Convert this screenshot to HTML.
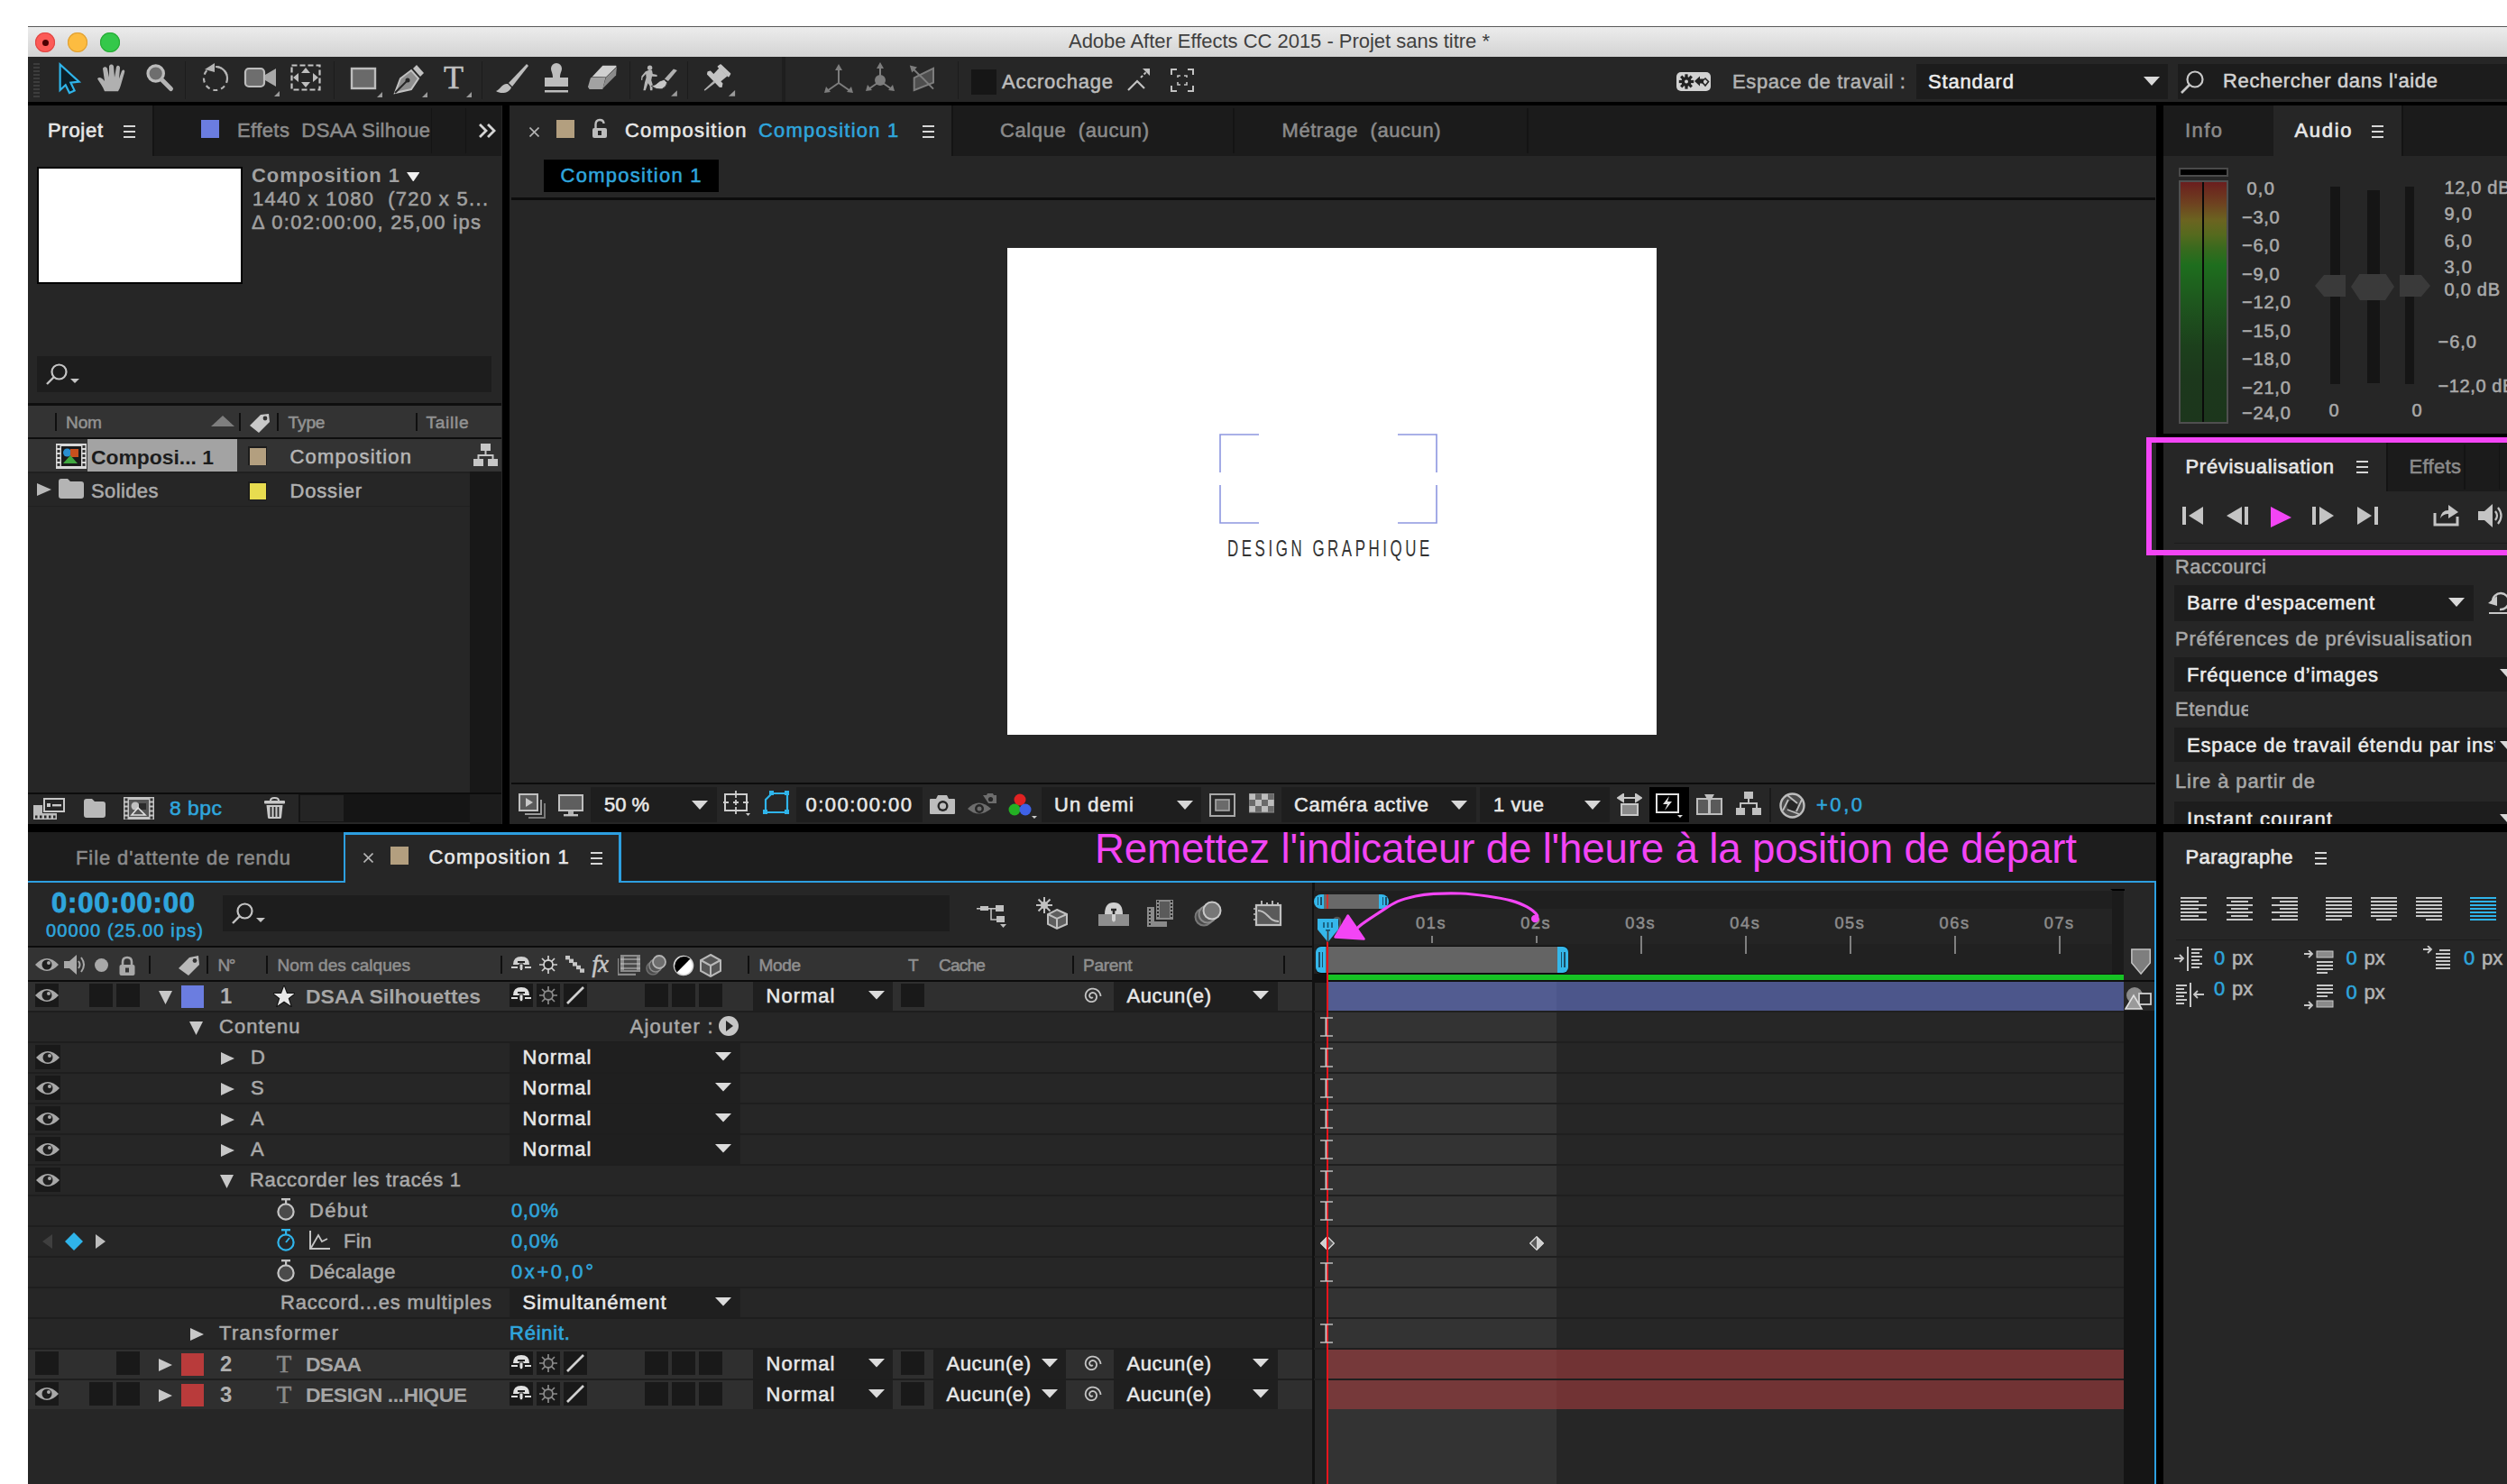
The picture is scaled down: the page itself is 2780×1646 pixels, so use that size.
<!DOCTYPE html>
<html lang="fr"><head><meta charset="utf-8"><title>Adobe After Effects CC 2015 - Projet sans titre *</title>
<style>
html,body{margin:0;padding:0;background:#fff;}
#r{position:relative;width:2780px;height:1646px;overflow:hidden;background:#fff;font-family:"Liberation Sans", sans-serif;}
#r div,#r span,#r svg{position:absolute;}
#r span{white-space:pre;-webkit-text-stroke:0.55px;}
</style></head><body><div id="r">
<div style="left:31px;top:29px;width:2749px;height:1617px;background:#000;"></div>
<div style="left:31px;top:29px;width:2749px;height:1px;background:#5a5a5a;"></div>
<div style="left:31px;top:30px;width:2749px;height:33px;background:linear-gradient(#ececec,#d3d3d3);"></div>
<div style="left:39px;top:36px;width:22px;height:22px;background:#fc5b57;border-radius:50%;box-shadow:inset 0 0 0 1px #df4744;"></div>
<div style="left:75px;top:36px;width:22px;height:22px;background:#fdbc40;border-radius:50%;box-shadow:inset 0 0 0 1px #de9f34;"></div>
<div style="left:111px;top:36px;width:22px;height:22px;background:#34c84a;border-radius:50%;box-shadow:inset 0 0 0 1px #27aa35;"></div>
<div style="left:46.5px;top:43.5px;width:7px;height:7px;background:#4c0102;border-radius:50%;"></div>
<span style="left:1185.0px;top:30.5px;font-size:22px;line-height:30px;color:#404040;letter-spacing:-0.02px;-webkit-text-stroke:0;">Adobe After Effects CC 2015 - Projet sans titre *</span>
<div style="left:31px;top:63px;width:2749px;height:50px;background:#262626;"></div>
<div style="left:37px;top:70px;width:7px;height:2px;background:#3c3c3c;"></div>
<div style="left:37px;top:74px;width:7px;height:2px;background:#3c3c3c;"></div>
<div style="left:37px;top:78px;width:7px;height:2px;background:#3c3c3c;"></div>
<div style="left:37px;top:82px;width:7px;height:2px;background:#3c3c3c;"></div>
<div style="left:37px;top:86px;width:7px;height:2px;background:#3c3c3c;"></div>
<div style="left:37px;top:90px;width:7px;height:2px;background:#3c3c3c;"></div>
<div style="left:37px;top:94px;width:7px;height:2px;background:#3c3c3c;"></div>
<div style="left:37px;top:98px;width:7px;height:2px;background:#3c3c3c;"></div>
<div style="left:37px;top:102px;width:7px;height:2px;background:#3c3c3c;"></div>
<div style="left:37px;top:106px;width:7px;height:2px;background:#3c3c3c;"></div>
<div style="left:205px;top:68px;width:1px;height:42px;background:#1c1c1c;"></div>
<div style="left:370px;top:68px;width:1px;height:42px;background:#1c1c1c;"></div>
<div style="left:534px;top:68px;width:1px;height:42px;background:#1c1c1c;"></div>
<div style="left:698px;top:68px;width:1px;height:42px;background:#1c1c1c;"></div>
<div style="left:762px;top:68px;width:1px;height:42px;background:#1c1c1c;"></div>
<div style="left:1062px;top:68px;width:1px;height:42px;background:#1c1c1c;"></div>
<div style="left:866.5px;top:63px;width:4px;height:50px;background:#1e1e1e;"></div>
<svg style="left:62px;top:66px;" width="30" height="42" viewBox="0 0 30 42" preserveAspectRatio="none"><path d="M4.6 5.5V34L10.7 28.3L15 37L20.6 34.4L16.4 25.6L25.6 24.7Z" fill="#0c1e27" stroke="#2fb4ea" stroke-width="2.2" stroke-linejoin="miter"/></svg>
<svg style="left:107px;top:70px;" width="36" height="33" viewBox="0 0 36 38" preserveAspectRatio="none"><path d="M9 36C7 30 3 24 1 20C3 17 6 19 9 23L7 7C8 4 11 4 12 7L14 18L14 4C15 1 18 1 19 4L20 18L22 5C23 2 26 3 26 6L25 20L28 10C30 7 32 9 31 12L27 28C26 32 25 34 24 36Z" fill="#b0b0b0"/></svg>
<svg style="left:160px;top:69px;" width="36" height="36" viewBox="0 0 36 36" preserveAspectRatio="none"><circle cx="12.7" cy="12.5" r="8.7" fill="#6e6e6e" stroke="#bcbcbc" stroke-width="3.2"/><path d="M19.5 19.5L29.5 29.5" stroke="#b4b4b4" stroke-width="5" stroke-linecap="round"/></svg>
<svg style="left:222px;top:68px;" width="34" height="36" viewBox="0 0 34 36" preserveAspectRatio="none"><circle cx="17" cy="19" r="13" fill="none" stroke="#b4b4b4" stroke-width="2.2" stroke-dasharray="5 4"/><path d="M17 6A13 13 0 0 1 30 19" fill="none" stroke="#b4b4b4" stroke-width="2.2"/><path d="M5 9L16 2V12Z" fill="#b4b4b4"/></svg>
<svg style="left:270px;top:72.5px;" width="40" height="34" viewBox="0 0 40 34" preserveAspectRatio="none"><rect x="2" y="3" width="21" height="20" rx="4" fill="#6e6e6e" stroke="#bdbdbd" stroke-width="2.2"/><path d="M24 10L36 3V23L24 16Z" fill="#a8a8a8"/><path d="M40 28V34H34Z" fill="#9a9a9a"/></svg>
<svg style="left:322px;top:71px;" width="34" height="32" viewBox="0 0 34 32" preserveAspectRatio="none"><rect x="1.5" y="1.5" width="31" height="27" fill="none" stroke="#c4c4c4" stroke-width="2.2" stroke-dasharray="6 3"/><path d="M17 4L22 10H12Z M17 26L22 20H12Z M3 15L9 10V20Z M31 15L25 10V20Z" fill="#bdbdbd"/></svg>
<svg style="left:388px;top:74px;" width="40" height="36" viewBox="0 0 40 36" preserveAspectRatio="none"><rect x="2" y="2" width="26" height="22" fill="#6a6a6a" stroke="#bdbdbd" stroke-width="2.4"/><path d="M36 28V34H30Z" fill="#9a9a9a"/></svg>
<svg style="left:436px;top:70px;" width="40" height="40" viewBox="0 0 40 40" preserveAspectRatio="none"><path d="M2 33L8 17L20 8L28 17L20 29Z" fill="#8d8d8d" stroke="#c2c2c2" stroke-width="2"/><path d="M22 6L26 2L34 11L30 15Z" fill="#c2c2c2"/><path d="M2 33L15 20" stroke="#262626" stroke-width="2"/><circle cx="16" cy="19" r="2.5" fill="#262626"/><path d="M38 32V38H32Z" fill="#9a9a9a"/></svg>
<span style="left:492.0px;top:66.0px;font-size:36px;line-height:40px;color:#c0c0c0;font-family:'Liberation Serif',serif;">T</span>
<svg style="left:517px;top:102px;" width="6" height="6" viewBox="0 0 6 6" preserveAspectRatio="none"><path d="M6 0V6H0Z" fill="#9a9a9a"/></svg>
<svg style="left:549px;top:70px;" width="38" height="36" viewBox="0 0 38 36" preserveAspectRatio="none"><path d="M35 1L15 22L19 26L37 3Z" fill="#bdbdbd"/><path d="M14 23C8 22 6 29 1 31C7 35 16 33 18 27Z" fill="#bdbdbd"/></svg>
<svg style="left:601px;top:70px;" width="32" height="36" viewBox="0 0 32 36" preserveAspectRatio="none"><path d="M12 16C12 11 10 9 10 6A6 6 0 0 1 22 6C22 9 20 11 20 16H29V26H3V16Z" fill="#bdbdbd"/><rect x="3" y="30" width="26" height="2.5" fill="#bdbdbd"/></svg>
<svg style="left:650px;top:72px;" width="36" height="30" viewBox="0 0 36 30" preserveAspectRatio="none"><path d="M6.8 13.1L18.3 0.8L33.1 0.8L33.7 2L21.9 13.5Z" fill="#cfcfcf"/><path d="M6.4 13.5L21.5 13.9L18.3 27.1L3.6 27.1L2 24.3L4.8 14.7Z" fill="#a2a2a2"/><path d="M21.9 13.9L33.9 2.4L33.1 11.5L18.3 26.3Z" fill="#8a8a8a"/></svg>
<svg style="left:710px;top:70px;" width="42" height="40" viewBox="0 0 42 40" preserveAspectRatio="none"><circle cx="10.6" cy="5.2" r="2.7" fill="#b4b4b4"/><path d="M9.0 8.0L13.0 8.0L13.8 11.9L18.6 13.1L18.6 15.1L13.0 14.7L12.2 19.1L13.8 23.9L13.4 30.3L11.0 30.3L10.6 25.5L8.6 22.3L5.8 30.3L3.4 30.3L5.0 21.5L6.6 15.9L6.2 11.9L2.6 15.9L2.2 19.1L1.0 18.7L1.4 14.4L5.8 9.2Z" fill="#b4b4b4"/><path d="M26.9 17.5L36.9 6.4L40.9 8.0L30.9 19.9Z" fill="#b0b0b0"/><path d="M26.5 18.3L29.7 21.5Q29.5 26 24.1 28.7Q18 30 12.2 25.5Q17 24.5 21.7 19.9Z" fill="#c6c6c6" stroke="#262626" stroke-width="0.8"/><path d="M34.1 36.7H40.9V30.3Z" fill="#9a9a9a"/></svg>
<svg style="left:778px;top:70px;" width="40" height="40" viewBox="0 0 40 40" preserveAspectRatio="none"><path d="M18.4 4.0L21.2 2.0L31.5 11.9L29.9 14.7Z" fill="#c4c4c4" stroke="#c4c4c4" stroke-width="1.6" stroke-linejoin="round"/><path d="M19.6 5.2L28.7 14.3L20.5 21L12.5 13Z" fill="#c4c4c4"/><path d="M7.2 9.9L9.6 9.2L22.7 22.7L21.9 26.3L20.0 25.9L6.8 12.3Z" fill="#c4c4c4" stroke="#c4c4c4" stroke-width="1.6" stroke-linejoin="round"/><path d="M13.6 19.5L15.6 21.5L3.6 30.7L2.8 29.5Z" fill="#b0b0b0"/><path d="M29.9 36.7H37.1V29.9Z" fill="#9a9a9a"/></svg>
<svg style="left:913px;top:70px;" width="34" height="36" viewBox="0 0 34 36" preserveAspectRatio="none"><path d="M17 5V22M17 22L4 31M17 22L30 31" stroke="#7d7d7d" stroke-width="2" fill="none"/><path d="M17 1L21 8H13Z M1 33L3 26L8 32Z M33 33L31 26L26 32Z" fill="#7d7d7d"/></svg>
<svg style="left:959px;top:68px;" width="34" height="38" viewBox="0 0 34 38" preserveAspectRatio="none"><path d="M17 5V22M17 22L4 31M17 22L30 31" stroke="#7d7d7d" stroke-width="2" fill="none"/><path d="M17 1L21 8H13Z M1 33L3 26L8 32Z M33 33L31 26L26 32Z" fill="#7d7d7d"/><circle cx="17" cy="21" r="6" fill="#7d7d7d"/></svg>
<svg style="left:1008px;top:71px;" width="30" height="32" viewBox="0 0 30 32" preserveAspectRatio="none"><path d="M5.7 15.3L27 4.8V20.6L5.7 29Z" fill="#4e4e4e" stroke="#7d7d7d" stroke-width="2"/><path d="M14.8 15.3L4 5M14.8 15.3L27 27.6" stroke="#7d7d7d" stroke-width="2"/><path d="M0.8 1.6L9 3.6L3.2 9.6Z" fill="#7d7d7d"/></svg>
<div style="left:1077px;top:77px;width:28px;height:28px;background:#161616;"></div>
<span style="left:1111px;top:76.4px;font-size:21.96px;line-height:30px;color:#bcbcbc;letter-spacing:0.78px;">Accrochage</span>
<svg style="left:1249px;top:74px;" width="28" height="28" viewBox="0 0 28 28" preserveAspectRatio="none"><path d="M2 26L12 16L20 24" stroke="#c2c2c2" stroke-width="2.2" fill="none"/><path d="M16 12L24 4" stroke="#c2c2c2" stroke-width="2" stroke-dasharray="3 2"/><path d="M26 2V10L18 2Z" fill="#c2c2c2"/></svg>
<svg style="left:1298px;top:76px;" width="26" height="26" viewBox="0 0 26 26" preserveAspectRatio="none"><path d="M1 7V1H7M19 1H25V7M25 19V25H19M7 25H1V19" stroke="#c2c2c2" stroke-width="2" fill="none"/><path d="M8 10V8H11M15 8H18V10M18 15V18H15M11 18H8V15" stroke="#c2c2c2" stroke-width="1.6" fill="none"/></svg>
<div style="left:1859px;top:80px;width:38px;height:21px;background:#d2d2d2;border-radius:5px;"></div>
<svg style="left:1859px;top:80px;" width="38" height="21" viewBox="0 0 38 21" preserveAspectRatio="none"><g transform="translate(11 10.5)"><circle r="5.4" fill="#222"/><rect x="-1.6" y="-8.2" width="3.2" height="4" transform="rotate(0)" fill="#222"/><rect x="-1.6" y="-8.2" width="3.2" height="4" transform="rotate(45)" fill="#222"/><rect x="-1.6" y="-8.2" width="3.2" height="4" transform="rotate(90)" fill="#222"/><rect x="-1.6" y="-8.2" width="3.2" height="4" transform="rotate(135)" fill="#222"/><rect x="-1.6" y="-8.2" width="3.2" height="4" transform="rotate(180)" fill="#222"/><rect x="-1.6" y="-8.2" width="3.2" height="4" transform="rotate(225)" fill="#222"/><rect x="-1.6" y="-8.2" width="3.2" height="4" transform="rotate(270)" fill="#222"/><rect x="-1.6" y="-8.2" width="3.2" height="4" transform="rotate(315)" fill="#222"/><circle r="2" fill="#d2d2d2"/></g><path d="M20 10L26 4.5V7.5H30V12.5H26V15.5Z" fill="#222"/><path d="M28 10.5L32 7L35.5 10.5L32 15Z" fill="none" stroke="#222" stroke-width="1.6"/></svg>
<span style="left:1921px;top:76.4px;font-size:21.96px;line-height:30px;color:#b2b2b2;letter-spacing:0.63px;">Espace de travail :</span>
<div style="left:2125px;top:71px;width:279px;height:39px;background:#1c1c1c;"></div>
<span style="left:2138px;top:76.4px;font-size:21.96px;line-height:30px;color:#ececec;letter-spacing:0.84px;">Standard</span>
<svg style="left:2377.0px;top:85.0px;" width="18" height="10" viewBox="0 0 18 10" preserveAspectRatio="none"><path d="M0 0H18L9.0 10Z" fill="#d8d8d8"/></svg>
<div style="left:2415px;top:71px;width:365px;height:39px;background:#1c1c1c;"></div>
<svg style="left:2417px;top:76px;" width="30" height="30" viewBox="0 0 30 30" preserveAspectRatio="none"><circle cx="17" cy="12" r="8.5" fill="none" stroke="#c8c8c8" stroke-width="2.2"/><path d="M11 18L2 27" stroke="#c8c8c8" stroke-width="2.6"/></svg>
<span style="left:2465px;top:75.0px;font-size:21.96px;line-height:30px;color:#d2d2d2;letter-spacing:0.67px;">Rechercher dans l&#x27;aide</span>
<div style="left:31px;top:117px;width:525.7px;height:797px;background:#262626;"></div>
<div style="left:169px;top:117px;width:387px;height:56px;background:#1b1b1b;"></div>
<div style="left:169px;top:117px;width:2px;height:56px;background:#141414;"></div>
<span style="left:53px;top:129.5px;font-size:21.96px;line-height:30px;color:#e6e6e6;letter-spacing:0.73px;-webkit-text-stroke:0.7px;">Projet</span>
<div style="left:137.0px;top:138.5px;width:13px;height:2px;background:#d6d6d6;"></div>
<div style="left:137.0px;top:144.5px;width:13px;height:2px;background:#d6d6d6;"></div>
<div style="left:137.0px;top:150.5px;width:13px;height:2px;background:#d6d6d6;"></div>
<div style="left:223px;top:133px;width:20px;height:20px;background:#6b7de0;"></div>
<span style="left:263px;top:129.5px;font-size:21.96px;line-height:30px;color:#8b8b8b;letter-spacing:0.43px;">Effets  DSAA Silhoue</span>
<div style="left:478px;top:120px;width:1px;height:50px;background:#141414;"></div>
<div style="left:516px;top:120px;width:1px;height:50px;background:#141414;"></div>
<svg style="left:530px;top:136px;" width="20" height="18" viewBox="0 0 20 18" preserveAspectRatio="none"><path d="M2 2L9 9L2 16M11 2L18 9L11 16" stroke="#d6d6d6" stroke-width="2.8" fill="none"/></svg>
<div style="left:41px;top:185px;width:228px;height:130px;background:#000;"></div>
<div style="left:43px;top:187px;width:224px;height:126px;background:#fff;"></div>
<span style="left:279px;top:180.0px;font-size:21.96px;line-height:30px;color:#a2a2a2;font-weight:700;-webkit-text-stroke:0;letter-spacing:0.96px;">Composition 1</span>
<svg style="left:450.75px;top:190.75px;" width="14.5" height="10.5" viewBox="0 0 14.5 10.5" preserveAspectRatio="none"><path d="M0 0H14.5L7.25 10.5Z" fill="#f0f0f0"/></svg>
<span style="left:280px;top:206.0px;font-size:21.96px;line-height:30px;color:#a0a0a0;letter-spacing:1.32px;">1440 x 1080  (720 x 5...</span>
<span style="left:279px;top:232.0px;font-size:21.96px;line-height:30px;color:#a0a0a0;letter-spacing:1.34px;">Δ 0:02:00:00, 25,00 ips</span>
<div style="left:41px;top:395px;width:504px;height:40px;background:#1d1d1d;"></div>
<svg style="left:50px;top:401px;" width="40" height="28" viewBox="0 0 40 28" preserveAspectRatio="none"><circle cx="15.5" cy="11.5" r="8" fill="none" stroke="#c4c4c4" stroke-width="2.2"/><path d="M10 17L2 25" stroke="#c4c4c4" stroke-width="2.4"/><path d="M28 19H38L33 24Z" fill="#c4c4c4"/></svg>
<div style="left:31px;top:447px;width:525px;height:3px;background:#0e0e0e;"></div>
<div style="left:31px;top:450px;width:525px;height:35px;background:#333333;"></div>
<div style="left:31px;top:485px;width:525px;height:2px;background:#0e0e0e;"></div>
<div style="left:61px;top:458px;width:2px;height:20px;background:#0f0f0f;"></div>
<div style="left:265px;top:458px;width:2px;height:20px;background:#0f0f0f;"></div>
<div style="left:307px;top:458px;width:2px;height:20px;background:#0f0f0f;"></div>
<div style="left:461px;top:458px;width:2px;height:20px;background:#0f0f0f;"></div>
<span style="left:73px;top:453.5px;font-size:19.1px;line-height:30px;color:#929292;letter-spacing:-0.16px;">Nom</span>
<svg style="left:234px;top:461px;" width="26" height="12" viewBox="0 0 26 12" preserveAspectRatio="none"><path d="M0 12H26L13 0Z" fill="#7e7e7e"/></svg>
<svg style="left:274px;top:455px;" width="28" height="28" viewBox="0 0 28 28" preserveAspectRatio="none"><path d="M3 17L15 5L24 4L25 13L13 25Z" fill="#c8c8c8"/><circle cx="20" cy="9" r="2.4" fill="#333"/></svg>
<span style="left:319.5px;top:453.5px;font-size:19.1px;line-height:30px;color:#929292;letter-spacing:-0.14px;">Type</span>
<span style="left:472.5px;top:453.5px;font-size:19.1px;line-height:30px;color:#929292;letter-spacing:0.7px;">Taille</span>
<div style="left:31px;top:487px;width:525px;height:36px;background:#333333;"></div>
<div style="left:521px;top:523px;width:35px;height:356px;background:#181818;"></div>
<div style="left:97px;top:487px;width:166px;height:36px;background:#a3a3a3;"></div>
<svg style="left:62px;top:492px;" width="34" height="28" viewBox="0 0 34 28" preserveAspectRatio="none"><rect x="0" y="0" width="34" height="28" fill="#d8d8d8"/><rect x="6" y="3" width="22" height="22" fill="#1a1a1a"/><circle cx="12.5" cy="10" r="4.5" fill="#2a8fd0"/><rect x="16" y="6" width="9" height="9" fill="#c8501e"/><path d="M8 22L16 13L24 22Z" fill="#3fa83f"/><rect x="1.5" y="2" width="3" height="3" fill="#333"/><rect x="29.5" y="2" width="3" height="3" fill="#333"/><rect x="1.5" y="7" width="3" height="3" fill="#333"/><rect x="29.5" y="7" width="3" height="3" fill="#333"/><rect x="1.5" y="12" width="3" height="3" fill="#333"/><rect x="29.5" y="12" width="3" height="3" fill="#333"/><rect x="1.5" y="17" width="3" height="3" fill="#333"/><rect x="29.5" y="17" width="3" height="3" fill="#333"/><rect x="1.5" y="22" width="3" height="3" fill="#333"/><rect x="29.5" y="22" width="3" height="3" fill="#333"/></svg>
<span style="left:101px;top:492.0px;font-size:22.92px;line-height:30px;color:#1c1c1c;font-weight:700;-webkit-text-stroke:0;letter-spacing:-0.02px;">Composi... 1</span>
<div style="left:275px;top:495px;width:21px;height:21px;background:#1c1c1c;"></div>
<div style="left:276.5px;top:496.5px;width:18.5px;height:19px;background:#b39f7f;"></div>
<span style="left:321.5px;top:492.0px;font-size:21.96px;line-height:30px;color:#b6b6b6;letter-spacing:1.25px;">Composition</span>
<svg style="left:525px;top:492px;" width="27" height="26" viewBox="0 0 27 26" preserveAspectRatio="none"><rect x="8" y="0" width="11" height="8" fill="#c6c6c6"/><rect x="0" y="17" width="11" height="8" fill="#c6c6c6"/><rect x="16" y="17" width="11" height="8" fill="#c6c6c6"/><path d="M13.5 8V13M5.5 17V13H21.5V17" stroke="#c6c6c6" stroke-width="2" fill="none"/></svg>
<div style="left:31px;top:523px;width:490px;height:1.5px;background:#202020;"></div>
<div style="left:31px;top:560.5px;width:490px;height:1.5px;background:#202020;"></div>
<svg style="left:40.5px;top:536.0px;" width="16" height="14" viewBox="0 0 16 14" preserveAspectRatio="none"><path d="M0 0V14L16 7.0Z" fill="#b9b9b9"/></svg>
<svg style="left:64px;top:530px;" width="30" height="24" viewBox="0 0 30 24" preserveAspectRatio="none"><path d="M1 4Q1 1 4 1H11L14 4H26Q29 4 29 7V20Q29 23 26 23H4Q1 23 1 20Z" fill="#b4b4b4"/></svg>
<span style="left:101px;top:530.0px;font-size:21.96px;line-height:30px;color:#aaaaaa;letter-spacing:0.41px;">Solides</span>
<div style="left:275px;top:534px;width:21px;height:21px;background:#1c1c1c;"></div>
<div style="left:276.5px;top:535.5px;width:18.5px;height:18.5px;background:#e8dc4f;"></div>
<span style="left:321.5px;top:530.0px;font-size:21.96px;line-height:30px;color:#b0b0b0;letter-spacing:0.85px;">Dossier</span>
<div style="left:31px;top:879px;width:525px;height:2px;background:#0c0c0c;"></div>
<div style="left:331px;top:881px;width:190px;height:31px;background:#151515;"></div>
<div style="left:333px;top:882px;width:48px;height:29px;background:#242424;"></div>
<div style="left:521px;top:881px;width:35px;height:33px;background:#1c1c1c;"></div>
<svg style="left:37px;top:884px;" width="35" height="26" viewBox="0 0 35 26" preserveAspectRatio="none"><rect x="0" y="9" width="26" height="16" fill="#bdbdbd"/><rect x="10" y="0" width="25" height="18" fill="#262626"/><rect x="12" y="2" width="22" height="14" fill="none" stroke="#c8c8c8" stroke-width="2"/><rect x="15" y="7" width="4" height="4" fill="#c8c8c8"/><rect x="21" y="8" width="10" height="2.4" fill="#c8c8c8"/><rect x="2" y="20.5" width="2.5" height="3" fill="#262626"/><rect x="7" y="20.5" width="2.5" height="3" fill="#262626"/><rect x="12" y="20.5" width="2.5" height="3" fill="#262626"/><rect x="17" y="20.5" width="2.5" height="3" fill="#262626"/><rect x="22" y="20.5" width="2.5" height="3" fill="#262626"/></svg>
<svg style="left:92px;top:885px;" width="26" height="23" viewBox="0 0 26 23" preserveAspectRatio="none"><path d="M1 4Q1 1 4 1H10L13 4H22Q25 4 25 7V19Q25 22 22 22H4Q1 22 1 19Z" fill="#b9b9b9"/></svg>
<svg style="left:137px;top:884px;" width="34" height="25" viewBox="0 0 34 25" preserveAspectRatio="none"><rect x="0" y="0" width="34" height="25" fill="#c4c4c4"/><rect x="6" y="3" width="22" height="19" fill="#555"/><circle cx="13" cy="10" r="4.5" fill="#c0c0c0"/><rect x="17" y="7" width="8" height="7" fill="#2a2a2a"/><path d="M9 20L16 12L24 20Z" fill="none" stroke="#e0e0e0" stroke-width="1.6"/><rect x="1.5" y="1.5" width="3" height="3" fill="#333"/><rect x="29.5" y="1.5" width="3" height="3" fill="#333"/><rect x="1.5" y="6.5" width="3" height="3" fill="#333"/><rect x="29.5" y="6.5" width="3" height="3" fill="#333"/><rect x="1.5" y="11.5" width="3" height="3" fill="#333"/><rect x="29.5" y="11.5" width="3" height="3" fill="#333"/><rect x="1.5" y="16.5" width="3" height="3" fill="#333"/><rect x="29.5" y="16.5" width="3" height="3" fill="#333"/><rect x="1.5" y="21.5" width="3" height="3" fill="#333"/><rect x="29.5" y="21.5" width="3" height="3" fill="#333"/></svg>
<span style="left:188px;top:881.0px;font-size:22.92px;line-height:30px;color:#2fa5dc;letter-spacing:0.49px;">8 bpc</span>
<svg style="left:293px;top:884px;" width="23" height="25" viewBox="0 0 23 25" preserveAspectRatio="none"><path d="M7 4Q7 1 11.5 1Q16 1 16 4" stroke="#c8c8c8" stroke-width="2" fill="none"/><rect x="0" y="4" width="23" height="3.4" rx="1" fill="#c8c8c8"/><path d="M2.5 9H20.5L19 23Q18.8 24 17.5 24H5.5Q4.2 24 4 23Z" fill="#c8c8c8"/><path d="M7.5 11V22M11.5 11V22M15.5 11V22" stroke="#262626" stroke-width="1.8"/></svg>
<div style="left:565px;top:117px;width:1826px;height:797px;background:#262626;"></div>
<div style="left:1055px;top:117px;width:1336px;height:56px;background:#1b1b1b;"></div>
<div style="left:1055px;top:117px;width:2px;height:56px;background:#141414;"></div>
<div style="left:1367px;top:120px;width:1.5px;height:50px;background:#141414;"></div>
<div style="left:1693px;top:120px;width:1.5px;height:50px;background:#141414;"></div>
<svg style="left:586.5px;top:140.5px;" width="11" height="11" viewBox="0 0 11 11" preserveAspectRatio="none"><path d="M0.5 0.5L10.5 10.5M10.5 0.5L0.5 10.5" stroke="#b4b4b4" stroke-width="1.6"/></svg>
<div style="left:617px;top:133px;width:20px;height:20px;background:#b39f7f;"></div>
<svg style="left:656px;top:131px;" width="18" height="23" viewBox="0 0 18 23" preserveAspectRatio="none"><path d="M4.5 11V7Q4.5 2 9 2Q13.5 2 13.5 6" stroke="#bdbdbd" stroke-width="2.4" fill="none"/><rect x="1" y="11" width="16" height="11" rx="2" fill="#bdbdbd"/><rect x="7" y="14" width="4" height="5" fill="#262626"/></svg>
<span style="left:693px;top:129.5px;font-size:21.96px;line-height:30px;color:#e8e8e8;letter-spacing:1.25px;">Composition</span>
<span style="left:841px;top:129.5px;font-size:21.96px;line-height:30px;color:#2fa5dc;letter-spacing:1.24px;">Composition 1</span>
<div style="left:1022.5px;top:139px;width:13px;height:2px;background:#d6d6d6;"></div>
<div style="left:1022.5px;top:145px;width:13px;height:2px;background:#d6d6d6;"></div>
<div style="left:1022.5px;top:151px;width:13px;height:2px;background:#d6d6d6;"></div>
<span style="left:1109px;top:129.5px;font-size:21.96px;line-height:30px;color:#8b8b8b;letter-spacing:0.63px;">Calque  (aucun)</span>
<span style="left:1421.5px;top:129.5px;font-size:21.96px;line-height:30px;color:#8b8b8b;letter-spacing:0.59px;">Métrage  (aucun)</span>
<div style="left:603px;top:177px;width:194px;height:36px;background:#000;"></div>
<span style="left:621.5px;top:180.0px;font-size:21.96px;line-height:30px;color:#2fa5dc;letter-spacing:1.31px;">Composition 1</span>
<div style="left:567px;top:218.5px;width:1823px;height:3px;background:#0c0c0c;"></div>
<div style="left:1117px;top:275px;width:720px;height:540px;background:#fff;"></div>
<svg style="left:1352px;top:481px;" width="242" height="100" viewBox="0 0 242 100" preserveAspectRatio="none"><path d="M44 1H1V43M1 57V99H44M198 1H241V43M241 57V99H198" stroke="#8d97e0" stroke-width="1.6" fill="none"/></svg>
<span style="left:1360.5px;top:593px;font-size:25.6px;line-height:30px;color:#333;letter-spacing:5.4px;transform:scaleX(0.66);transform-origin:0 0;-webkit-text-stroke:0;">DESIGN GRAPHIQUE</span>
<div style="left:567px;top:867.5px;width:1823px;height:2.5px;background:#0c0c0c;"></div>
<svg style="left:575px;top:880px;" width="30" height="28" viewBox="0 0 30 28" preserveAspectRatio="none"><rect x="1" y="1" width="20" height="18" fill="#5a5a5a" stroke="#c0c0c0" stroke-width="2"/><path d="M8 5V15L16 10Z" fill="#c8c8c8"/><path d="M25 7V23H7" stroke="#9a9a9a" stroke-width="2" fill="none"/><path d="M29 11V27H11" stroke="#7a7a7a" stroke-width="2" fill="none"/></svg>
<svg style="left:619px;top:881px;" width="28" height="25" viewBox="0 0 28 25" preserveAspectRatio="none"><rect x="1" y="1" width="26" height="17" fill="#5e5e5e" stroke="#c0c0c0" stroke-width="2"/><rect x="11" y="19" width="6" height="3" fill="#b0b0b0"/><rect x="6" y="22" width="16" height="2.4" fill="#c0c0c0"/></svg>
<div style="left:655px;top:873px;width:140px;height:39px;background:#1e1e1e;"></div>
<span style="left:670px;top:878.0px;font-size:21.96px;line-height:30px;color:#e8e8e8;letter-spacing:-0.02px;">50 %</span>
<svg style="left:767.0px;top:888.0px;" width="18" height="10" viewBox="0 0 18 10" preserveAspectRatio="none"><path d="M0 0H18L9.0 10Z" fill="#d8d8d8"/></svg>
<svg style="left:802px;top:877px;" width="30" height="28" viewBox="0 0 30 28" preserveAspectRatio="none"><rect x="2" y="4" width="24" height="18" fill="none" stroke="#cdcdcd" stroke-width="2"/><path d="M14 0V8M14 18V26M0 13H6M22 13H28M11 13H17M14 10V16" stroke="#cdcdcd" stroke-width="1.8"/><path d="M25 25H30L27.5 28Z" fill="#cdcdcd"/></svg>
<svg style="left:846px;top:876.5px;" width="30" height="28" viewBox="0 0 30 28" preserveAspectRatio="none"><path d="M3 24V10L10 3H27V24Z" fill="none" stroke="#2fb4ea" stroke-width="2.2"/><rect x="0" y="21" width="5" height="5" fill="#2fb4ea"/><rect x="24" y="21" width="5" height="5" fill="#2fb4ea"/><rect x="24" y="0" width="5" height="5" fill="#2fb4ea"/><rect x="7" y="0" width="5" height="5" fill="#2fb4ea"/></svg>
<div style="left:883px;top:873px;width:140px;height:39px;background:#1e1e1e;"></div>
<span style="left:893.5px;top:878.0px;font-size:21.96px;line-height:30px;color:#e8e8e8;letter-spacing:1.53px;">0:00:00:00</span>
<svg style="left:1031px;top:881px;" width="29" height="23" viewBox="0 0 29 23" preserveAspectRatio="none"><path d="M1 5H7L9 1H19L21 5H27Q28 5 28 6V21Q28 22 27 22H1Q0 22 0 21V6Q0 5 1 5Z" fill="#bdbdbd"/><circle cx="14.5" cy="13" r="6" fill="#262626"/><circle cx="14.5" cy="13" r="3.6" fill="#bdbdbd"/></svg>
<svg style="left:1072px;top:878px;" width="34" height="30" viewBox="0 0 34 30" preserveAspectRatio="none"><path d="M1 19Q13 6 27 19Q13 30 1 19Z" fill="#6d6d6d"/><circle cx="14" cy="19" r="5" fill="#262626"/><circle cx="14" cy="19" r="2.5" fill="#6d6d6d"/><path d="M18 4H22L23 2H29L30 4H33V13H24" fill="#6d6d6d"/><circle cx="26.5" cy="8.5" r="2.6" fill="#262626"/></svg>
<svg style="left:1117px;top:879px;" width="34" height="30" viewBox="0 0 34 30" preserveAspectRatio="none"><circle cx="14" cy="8" r="6.5" fill="#e02222"/><circle cx="8" cy="19" r="6.5" fill="#23b023"/><circle cx="20" cy="19" r="6.5" fill="#3f62e6"/><path d="M27 26H33L30 29Z" fill="#cdcdcd"/></svg>
<div style="left:1155px;top:873px;width:177px;height:39px;background:#1e1e1e;"></div>
<span style="left:1169px;top:878.0px;font-size:21.96px;line-height:30px;color:#e8e8e8;letter-spacing:1.04px;">Un demi</span>
<svg style="left:1305.0px;top:888.0px;" width="18" height="10" viewBox="0 0 18 10" preserveAspectRatio="none"><path d="M0 0H18L9.0 10Z" fill="#d8d8d8"/></svg>
<svg style="left:1341px;top:880px;" width="29" height="26" viewBox="0 0 29 26" preserveAspectRatio="none"><rect x="1" y="1" width="27" height="24" fill="none" stroke="#a8a8a8" stroke-width="2"/><rect x="7" y="7" width="15" height="12" fill="#6a6a6a" stroke="#a8a8a8" stroke-width="1.6"/></svg>
<svg style="left:1385px;top:880px;" width="28" height="22" viewBox="0 0 28 22" preserveAspectRatio="none"><rect x="0" y="0" width="7" height="7" fill="#bdbdbd"/><rect x="0" y="7" width="7" height="7" fill="#6a6a6a"/><rect x="0" y="14" width="7" height="7" fill="#bdbdbd"/><rect x="7" y="0" width="7" height="7" fill="#6a6a6a"/><rect x="7" y="7" width="7" height="7" fill="#bdbdbd"/><rect x="7" y="14" width="7" height="7" fill="#6a6a6a"/><rect x="14" y="0" width="7" height="7" fill="#bdbdbd"/><rect x="14" y="7" width="7" height="7" fill="#6a6a6a"/><rect x="14" y="14" width="7" height="7" fill="#bdbdbd"/><rect x="21" y="0" width="7" height="7" fill="#6a6a6a"/><rect x="21" y="7" width="7" height="7" fill="#bdbdbd"/><rect x="21" y="14" width="7" height="7" fill="#6a6a6a"/><rect x="0" y="0" width="28" height="21" fill="none" stroke="#8a8a8a" stroke-width="1"/></svg>
<div style="left:1421px;top:873px;width:216px;height:39px;background:#1e1e1e;"></div>
<span style="left:1435px;top:878.0px;font-size:21.96px;line-height:30px;color:#e8e8e8;letter-spacing:0.62px;">Caméra active</span>
<svg style="left:1609.0px;top:888.0px;" width="18" height="10" viewBox="0 0 18 10" preserveAspectRatio="none"><path d="M0 0H18L9.0 10Z" fill="#d8d8d8"/></svg>
<div style="left:1641px;top:873px;width:144px;height:39px;background:#1e1e1e;"></div>
<span style="left:1656px;top:878.0px;font-size:21.96px;line-height:30px;color:#e8e8e8;letter-spacing:0.57px;">1 vue</span>
<svg style="left:1757.0px;top:888.0px;" width="18" height="10" viewBox="0 0 18 10" preserveAspectRatio="none"><path d="M0 0H18L9.0 10Z" fill="#d8d8d8"/></svg>
<svg style="left:1793px;top:880px;" width="28" height="26" viewBox="0 0 28 26" preserveAspectRatio="none"><path d="M5 5H23M1 5L7 1V9ZM27 5L21 1V9Z" stroke="#c8c8c8" stroke-width="2" fill="#c8c8c8"/><rect x="5" y="12" width="18" height="12" fill="#8a8a8a" stroke="#c8c8c8" stroke-width="2"/></svg>
<div style="left:1829px;top:873px;width:44px;height:39px;background:#000;"></div>
<svg style="left:1836px;top:880px;" width="30" height="28" viewBox="0 0 30 28" preserveAspectRatio="none"><rect x="1" y="1" width="24" height="20" fill="none" stroke="#e0e0e0" stroke-width="2"/><path d="M15 3L8 12H13L10 19L18 9H13Z" fill="#e0e0e0"/><path d="M24 24H30L27 27Z" fill="#e0e0e0"/></svg>
<svg style="left:1881px;top:880px;" width="29" height="24" viewBox="0 0 29 24" preserveAspectRatio="none"><rect x="1" y="6" width="27" height="17" fill="#5a5a5a" stroke="#bdbdbd" stroke-width="2"/><path d="M9 1H20L16 8V23H13V8Z" fill="#bdbdbd"/></svg>
<svg style="left:1925px;top:878px;" width="28" height="27" viewBox="0 0 28 27" preserveAspectRatio="none"><rect x="9" y="0" width="10" height="8" fill="#c0c0c0"/><rect x="0" y="18" width="10" height="8" fill="#c0c0c0"/><rect x="18" y="18" width="10" height="8" fill="#c0c0c0"/><path d="M14 8V13M5 18V13H23V18" stroke="#c0c0c0" stroke-width="2" fill="none"/></svg>
<div style="left:1962px;top:874px;width:1.5px;height:38px;background:#1a1a1a;"></div>
<svg style="left:1973px;top:879px;" width="29" height="29" viewBox="0 0 29 29" preserveAspectRatio="none"><circle cx="14.5" cy="14.5" r="13" fill="#4a4a4a" stroke="#bdbdbd" stroke-width="2.4"/><path d="M14.5 14.5m-6 0a6 6 0 1 0 12 0a6 6 0 1 0 -12 0" fill="#262626"/><path d="M9 3L20 12M25 8L19 21M22 24L9 19M4 20L10 8" stroke="#bdbdbd" stroke-width="1.8"/></svg>
<span style="left:2014px;top:878.0px;font-size:21.96px;line-height:30px;color:#2fa5dc;letter-spacing:2.55px;">+0,0</span>
<div style="left:2399px;top:117px;width:381px;height:363.5px;background:#262626;"></div>
<div style="left:2399px;top:117px;width:122px;height:56px;background:#1b1b1b;"></div>
<div style="left:2663px;top:117px;width:117px;height:56px;background:#1b1b1b;"></div>
<div style="left:2663px;top:117px;width:2px;height:56px;background:#141414;"></div>
<span style="left:2423px;top:129.5px;font-size:21.96px;line-height:30px;color:#8b8b8b;letter-spacing:1.46px;">Info</span>
<span style="left:2544.5px;top:129.5px;font-size:21.96px;line-height:30px;color:#e6e6e6;letter-spacing:1.71px;-webkit-text-stroke:0.7px;">Audio</span>
<div style="left:2630.0px;top:139px;width:13px;height:2px;background:#d6d6d6;"></div>
<div style="left:2630.0px;top:145px;width:13px;height:2px;background:#d6d6d6;"></div>
<div style="left:2630.0px;top:151px;width:13px;height:2px;background:#d6d6d6;"></div>
<div style="left:2416px;top:186px;width:54.5px;height:10px;background:#4a4a4a;"></div>
<div style="left:2418px;top:188px;width:50.5px;height:6px;background:#000;"></div>
<div style="left:2416px;top:200px;width:54.5px;height:270px;background:#4f4f4f;"></div>
<div style="left:2418px;top:202px;width:50.5px;height:266px;background:linear-gradient(#6b1e1e 0%,#6e4220 9%,#6b6420 16%,#566a1e 21.8%,#3a6a1e 27.4%,#1e6e1e 34.6%,#1e561e 50.7%,#1c401c 68.4%,#1c381c 82%,#1c361c 100%);"></div>
<div style="left:2441.5px;top:202px;width:2px;height:266px;background:#0a0a0a;"></div>
<span style="left:2491.5px;top:194.0px;font-size:20.05px;line-height:30px;color:#a9a9a9;letter-spacing:1.22px;">0,0</span>
<span style="left:2486px;top:226.0px;font-size:20.05px;line-height:30px;color:#a9a9a9;letter-spacing:0.68px;">−3,0</span>
<span style="left:2486px;top:257.0px;font-size:20.05px;line-height:30px;color:#a9a9a9;letter-spacing:0.68px;">−6,0</span>
<span style="left:2486px;top:289.0px;font-size:20.05px;line-height:30px;color:#a9a9a9;letter-spacing:0.68px;">−9,0</span>
<span style="left:2486px;top:320.0px;font-size:20.05px;line-height:30px;color:#a9a9a9;letter-spacing:0.78px;">−12,0</span>
<span style="left:2486px;top:352.0px;font-size:20.05px;line-height:30px;color:#a9a9a9;letter-spacing:0.78px;">−15,0</span>
<span style="left:2486px;top:383.0px;font-size:20.05px;line-height:30px;color:#a9a9a9;letter-spacing:0.78px;">−18,0</span>
<span style="left:2486px;top:415.0px;font-size:20.05px;line-height:30px;color:#a9a9a9;letter-spacing:0.78px;">−21,0</span>
<span style="left:2486px;top:443.0px;font-size:20.05px;line-height:30px;color:#a9a9a9;letter-spacing:0.78px;">−24,0</span>
<div style="left:2584px;top:207px;width:11px;height:219px;background:#151515;"></div>
<div style="left:2625px;top:211px;width:14px;height:214px;background:#151515;"></div>
<div style="left:2667px;top:207px;width:10px;height:219px;background:#151515;"></div>
<svg style="left:2567px;top:304px;" width="128" height="30" viewBox="0 0 128 30" preserveAspectRatio="none"><path d="M0 13L10 1H34V25H10Z" fill="#3a3a3a"/><path d="M40 14L50 -1H78L88 14L78 29H50Z" fill="#3a3a3a"/><path d="M94 1H118L128 13L118 25H94Z" fill="#3a3a3a"/></svg>
<span style="left:2710.5px;top:193.0px;font-size:20.05px;line-height:30px;color:#a9a9a9;letter-spacing:0.66px;">12,0 dB</span>
<span style="left:2710.5px;top:222.0px;font-size:20.05px;line-height:30px;color:#a9a9a9;letter-spacing:1.22px;">9,0</span>
<span style="left:2710.5px;top:252.0px;font-size:20.05px;line-height:30px;color:#a9a9a9;letter-spacing:1.22px;">6,0</span>
<span style="left:2710.5px;top:281.0px;font-size:20.05px;line-height:30px;color:#a9a9a9;letter-spacing:1.22px;">3,0</span>
<span style="left:2710.5px;top:306.0px;font-size:20.05px;line-height:30px;color:#a9a9a9;letter-spacing:0.72px;">0,0 dB</span>
<span style="left:2703.5px;top:364.0px;font-size:20.05px;line-height:30px;color:#a9a9a9;letter-spacing:0.95px;">−6,0</span>
<span style="left:2703.5px;top:413.0px;font-size:20.05px;line-height:30px;color:#a9a9a9;letter-spacing:0.6px;">−12,0 dB</span>
<span style="left:2582.4px;top:440.0px;font-size:20.05px;line-height:30px;color:#a9a9a9;">0</span>
<span style="left:2674.4px;top:440.0px;font-size:20.05px;line-height:30px;color:#a9a9a9;">0</span>
<div style="left:2399px;top:490px;width:381px;height:424px;background:#262626;"></div>
<div style="left:2646px;top:490px;width:134px;height:55px;background:#1b1b1b;"></div>
<div style="left:2646px;top:490px;width:2px;height:55px;background:#141414;"></div>
<div style="left:2732px;top:493px;width:1.5px;height:50px;background:#141414;"></div>
<div style="left:2770.5px;top:493px;width:1.5px;height:50px;background:#141414;"></div>
<span style="left:2423.5px;top:502.5px;font-size:21.96px;line-height:30px;color:#e6e6e6;letter-spacing:0.72px;-webkit-text-stroke:0.7px;">Prévisualisation</span>
<div style="left:2612.5px;top:511px;width:13px;height:2px;background:#d6d6d6;"></div>
<div style="left:2612.5px;top:517px;width:13px;height:2px;background:#d6d6d6;"></div>
<div style="left:2612.5px;top:523px;width:13px;height:2px;background:#d6d6d6;"></div>
<span style="left:2671.5px;top:502.5px;font-size:21.96px;line-height:30px;color:#8b8b8b;letter-spacing:0.35px;">Effets</span>
<svg style="left:2420px;top:562px;" width="24" height="20" viewBox="0 0 24 20" preserveAspectRatio="none"><rect x="0" y="0" width="4" height="20" fill="#c4c4c4"/><path d="M23 0V20L7 10Z" fill="#c4c4c4"/></svg>
<svg style="left:2469px;top:562px;" width="25" height="20" viewBox="0 0 25 20" preserveAspectRatio="none"><path d="M17 0V20L0 10Z" fill="#c4c4c4"/><rect x="20" y="0" width="4" height="20" fill="#c4c4c4"/></svg>
<svg style="left:2517px;top:561px;" width="25" height="25" viewBox="0 0 25 25" preserveAspectRatio="none"><path d="M1 1L24 13L1 24Z" fill="#f345f5"/></svg>
<svg style="left:2564px;top:562px;" width="25" height="20" viewBox="0 0 25 20" preserveAspectRatio="none"><rect x="0" y="0" width="4" height="20" fill="#c4c4c4"/><path d="M8 0V20L24 10Z" fill="#c4c4c4"/></svg>
<svg style="left:2614px;top:562px;" width="24" height="20" viewBox="0 0 24 20" preserveAspectRatio="none"><path d="M0 0V20L16 10Z" fill="#c4c4c4"/><rect x="19" y="0" width="4" height="20" fill="#c4c4c4"/></svg>
<svg style="left:2698px;top:559px;" width="30" height="25" viewBox="0 0 30 25" preserveAspectRatio="none"><path d="M2 10V23H27V14" stroke="#c4c4c4" stroke-width="3" fill="none"/><path d="M8 16Q9 7 17 7V1L28 9L17 16V11Q11 11 8 16Z" fill="#c4c4c4"/></svg>
<svg style="left:2747px;top:558px;" width="30" height="28" viewBox="0 0 30 28" preserveAspectRatio="none"><path d="M1 9H8L17 1V27L8 19H1Z" fill="#c4c4c4"/><path d="M20 9Q24 14 20 19M23 5Q30 14 23 23" stroke="#c4c4c4" stroke-width="2.2" fill="none"/></svg>
<div style="left:2411px;top:601.5px;width:369px;height:1.5px;background:#1c1c1c;"></div>
<span style="left:2412px;top:614.0px;font-size:21.96px;line-height:30px;color:#a7a7a7;letter-spacing:0.42px;">Raccourci</span>
<div style="left:2411px;top:649px;width:332px;height:40px;background:#1d1d1d;"></div>
<span style="left:2425px;top:654.0px;font-size:21.96px;line-height:30px;color:#ececec;letter-spacing:0.72px;">Barre d&#x27;espacement</span>
<svg style="left:2715.0px;top:663.0px;" width="18" height="10" viewBox="0 0 18 10" preserveAspectRatio="none"><path d="M0 0H18L9.0 10Z" fill="#d8d8d8"/></svg>
<svg style="left:2758px;top:655px;" width="24" height="28" viewBox="0 0 24 28" preserveAspectRatio="none"><path d="M6 12A9 9 0 1 1 14 21" stroke="#c8c8c8" stroke-width="2.4" fill="none"/><path d="M1 14L11 6V17Z" fill="#c8c8c8"/><rect x="2" y="24" width="22" height="2" fill="#c8c8c8"/></svg>
<span style="left:2412px;top:694.0px;font-size:21.96px;line-height:30px;color:#a7a7a7;letter-spacing:0.76px;">Préférences de prévisualisation</span>
<div style="left:2411px;top:729px;width:369px;height:38px;background:#1d1d1d;"></div>
<span style="left:2425px;top:734.0px;font-size:21.96px;line-height:30px;color:#ececec;letter-spacing:0.77px;">Fréquence d’images</span>
<svg style="left:2772.0px;top:742.0px;" width="18" height="10" viewBox="0 0 18 10" preserveAspectRatio="none"><path d="M0 0H18L9.0 10Z" fill="#d8d8d8"/></svg>
<span style="left:2412px;top:772.0px;font-size:21.96px;line-height:30px;color:#a7a7a7;letter-spacing:0.53px;">Etendue</span>
<div style="left:2493px;top:772px;width:20px;height:30px;background:#262626;"></div>
<div style="left:2411px;top:807px;width:369px;height:38px;background:#1d1d1d;"></div>
<span style="left:2425px;top:812.0px;font-size:21.96px;line-height:30px;color:#ececec;letter-spacing:0.85px;">Espace de travail étendu par inst</span>
<div style="left:2766.5px;top:808px;width:14px;height:36px;background:#1d1d1d;"></div>
<svg style="left:2772.0px;top:822.0px;" width="18" height="10" viewBox="0 0 18 10" preserveAspectRatio="none"><path d="M0 0H18L9.0 10Z" fill="#d8d8d8"/></svg>
<span style="left:2412px;top:852.0px;font-size:21.96px;line-height:30px;color:#a7a7a7;letter-spacing:0.9px;">Lire à partir de</span>
<div style="left:2411px;top:889px;width:369px;height:25px;background:#1d1d1d;"></div>
<span style="left:2425px;top:894.0px;font-size:21.96px;line-height:30px;color:#ececec;letter-spacing:1.13px;">Instant courant</span>
<svg style="left:2772.0px;top:903.0px;" width="18" height="10" viewBox="0 0 18 10" preserveAspectRatio="none"><path d="M0 0H18L9.0 10Z" fill="#d8d8d8"/></svg>
<div style="left:2399px;top:914px;width:381px;height:9px;background:#000;"></div>
<div style="left:2399px;top:923px;width:381px;height:723px;background:#262626;"></div>
<span style="left:2423.5px;top:936.0px;font-size:21.96px;line-height:30px;color:#e6e6e6;letter-spacing:0.47px;-webkit-text-stroke:0.7px;">Paragraphe</span>
<div style="left:2566.5px;top:945px;width:13px;height:2px;background:#d6d6d6;"></div>
<div style="left:2566.5px;top:951px;width:13px;height:2px;background:#d6d6d6;"></div>
<div style="left:2566.5px;top:957px;width:13px;height:2px;background:#d6d6d6;"></div>
<svg style="left:2418.0px;top:995px;" width="29" height="26" viewBox="0 0 29 26" preserveAspectRatio="none"><rect x="0" y="0" width="29" height="2" fill="#c8c8c8"/><rect x="0" y="4" width="20" height="2" fill="#c8c8c8"/><rect x="0" y="8" width="29" height="2" fill="#c8c8c8"/><rect x="0" y="12" width="20" height="2" fill="#c8c8c8"/><rect x="0" y="16" width="29" height="2" fill="#c8c8c8"/><rect x="0" y="20" width="20" height="2" fill="#c8c8c8"/><rect x="0" y="24" width="29" height="2" fill="#c8c8c8"/></svg>
<svg style="left:2468.5px;top:995px;" width="29" height="26" viewBox="0 0 29 26" preserveAspectRatio="none"><rect x="0" y="0" width="29" height="2" fill="#c8c8c8"/><rect x="5" y="4" width="19" height="2" fill="#c8c8c8"/><rect x="0" y="8" width="29" height="2" fill="#c8c8c8"/><rect x="5" y="12" width="19" height="2" fill="#c8c8c8"/><rect x="0" y="16" width="29" height="2" fill="#c8c8c8"/><rect x="5" y="20" width="19" height="2" fill="#c8c8c8"/><rect x="0" y="24" width="29" height="2" fill="#c8c8c8"/></svg>
<svg style="left:2518.5px;top:995px;" width="29" height="26" viewBox="0 0 29 26" preserveAspectRatio="none"><rect x="0" y="0" width="29" height="2" fill="#c8c8c8"/><rect x="9" y="4" width="20" height="2" fill="#c8c8c8"/><rect x="0" y="8" width="29" height="2" fill="#c8c8c8"/><rect x="9" y="12" width="20" height="2" fill="#c8c8c8"/><rect x="0" y="16" width="29" height="2" fill="#c8c8c8"/><rect x="9" y="20" width="20" height="2" fill="#c8c8c8"/><rect x="0" y="24" width="29" height="2" fill="#c8c8c8"/></svg>
<svg style="left:2578.5px;top:995px;" width="29" height="26" viewBox="0 0 29 26" preserveAspectRatio="none"><rect x="0" y="0" width="29" height="2" fill="#c8c8c8"/><rect x="0" y="4" width="29" height="2" fill="#c8c8c8"/><rect x="0" y="8" width="29" height="2" fill="#c8c8c8"/><rect x="0" y="12" width="29" height="2" fill="#c8c8c8"/><rect x="0" y="16" width="29" height="2" fill="#c8c8c8"/><rect x="0" y="20" width="29" height="2" fill="#c8c8c8"/><rect x="0" y="24" width="18" height="2" fill="#c8c8c8"/></svg>
<svg style="left:2628.5px;top:995px;" width="29" height="26" viewBox="0 0 29 26" preserveAspectRatio="none"><rect x="0" y="0" width="29" height="2" fill="#c8c8c8"/><rect x="0" y="4" width="29" height="2" fill="#c8c8c8"/><rect x="0" y="8" width="29" height="2" fill="#c8c8c8"/><rect x="0" y="12" width="29" height="2" fill="#c8c8c8"/><rect x="0" y="16" width="29" height="2" fill="#c8c8c8"/><rect x="0" y="20" width="29" height="2" fill="#c8c8c8"/><rect x="6" y="24" width="17" height="2" fill="#c8c8c8"/></svg>
<svg style="left:2678.5px;top:995px;" width="29" height="26" viewBox="0 0 29 26" preserveAspectRatio="none"><rect x="0" y="0" width="29" height="2" fill="#c8c8c8"/><rect x="0" y="4" width="29" height="2" fill="#c8c8c8"/><rect x="0" y="8" width="29" height="2" fill="#c8c8c8"/><rect x="0" y="12" width="29" height="2" fill="#c8c8c8"/><rect x="0" y="16" width="29" height="2" fill="#c8c8c8"/><rect x="0" y="20" width="29" height="2" fill="#c8c8c8"/><rect x="11" y="24" width="18" height="2" fill="#c8c8c8"/></svg>
<svg style="left:2738.5px;top:995px;" width="29" height="26" viewBox="0 0 29 26" preserveAspectRatio="none"><rect x="0" y="0" width="29" height="2" fill="#2fb4ea"/><rect x="0" y="4" width="29" height="2" fill="#2fb4ea"/><rect x="0" y="8" width="29" height="2" fill="#2fb4ea"/><rect x="0" y="12" width="29" height="2" fill="#2fb4ea"/><rect x="0" y="16" width="29" height="2" fill="#2fb4ea"/><rect x="0" y="20" width="29" height="2" fill="#2fb4ea"/><rect x="0" y="24" width="29" height="2" fill="#2fb4ea"/></svg>
<div style="left:2413px;top:1041.5px;width:360px;height:1.5px;background:#1c1c1c;"></div>
<svg style="left:2411px;top:1050px;" width="34" height="28" viewBox="0 0 34 28" preserveAspectRatio="none"><path d="M0 13H9M6 9L10 13L6 17" stroke="#c8c8c8" stroke-width="1.8" fill="none"/><rect x="14" y="0" width="2" height="27" fill="#c8c8c8"/><rect x="19" y="2" width="12" height="2" fill="#c8c8c8"/><rect x="19" y="6" width="9" height="2" fill="#c8c8c8"/><rect x="19" y="10" width="12" height="2" fill="#c8c8c8"/><rect x="19" y="14" width="9" height="2" fill="#c8c8c8"/><rect x="19" y="18" width="12" height="2" fill="#c8c8c8"/><rect x="19" y="22" width="9" height="2" fill="#c8c8c8"/></svg>
<span style="left:2455px;top:1048.0px;font-size:21.96px;line-height:30px;color:#2fa5dc;">0</span>
<span style="left:2475px;top:1048.0px;font-size:21.96px;line-height:30px;color:#b4b4b4;">px</span>
<svg style="left:2554.5px;top:1053.5px;" width="34" height="28" viewBox="0 0 34 28" preserveAspectRatio="none"><path d="M0 4H8M5 0L9 4L5 8" stroke="#c8c8c8" stroke-width="1.8" fill="none"/><rect x="14" y="1" width="18" height="7" fill="#8a8a8a" stroke="#c8c8c8" stroke-width="1"/><rect x="14" y="12" width="18" height="2" fill="#c8c8c8"/><rect x="14" y="16" width="18" height="2" fill="#c8c8c8"/><rect x="14" y="20" width="18" height="2" fill="#c8c8c8"/><rect x="14" y="24" width="12" height="2" fill="#c8c8c8"/></svg>
<span style="left:2601.5px;top:1048.0px;font-size:21.96px;line-height:30px;color:#2fa5dc;">0</span>
<span style="left:2621.5px;top:1048.0px;font-size:21.96px;line-height:30px;color:#b4b4b4;">px</span>
<svg style="left:2687px;top:1049px;" width="34" height="28" viewBox="0 0 34 28" preserveAspectRatio="none"><path d="M0 4H8M5 0L9 4L5 8" stroke="#c8c8c8" stroke-width="1.8" fill="none"/><rect x="18" y="4" width="12" height="2" fill="#c8c8c8"/><rect x="14" y="8" width="16" height="2" fill="#c8c8c8"/><rect x="14" y="12" width="16" height="2" fill="#c8c8c8"/><rect x="14" y="16" width="16" height="2" fill="#c8c8c8"/><rect x="14" y="20" width="16" height="2" fill="#c8c8c8"/><rect x="14" y="24" width="16" height="2" fill="#c8c8c8"/></svg>
<span style="left:2732px;top:1048.0px;font-size:21.96px;line-height:30px;color:#2fa5dc;">0</span>
<span style="left:2752px;top:1048.0px;font-size:21.96px;line-height:30px;color:#b4b4b4;">px</span>
<svg style="left:2411px;top:1090px;" width="34" height="28" viewBox="0 0 34 28" preserveAspectRatio="none"><rect x="2" y="2" width="12" height="2" fill="#c8c8c8"/><rect x="2" y="6" width="9" height="2" fill="#c8c8c8"/><rect x="2" y="10" width="12" height="2" fill="#c8c8c8"/><rect x="2" y="14" width="9" height="2" fill="#c8c8c8"/><rect x="2" y="18" width="12" height="2" fill="#c8c8c8"/><rect x="2" y="22" width="9" height="2" fill="#c8c8c8"/><rect x="17" y="0" width="2" height="27" fill="#c8c8c8"/><path d="M33 13H23M26 9L22 13L26 17" stroke="#c8c8c8" stroke-width="1.8" fill="none"/></svg>
<span style="left:2455px;top:1082.0px;font-size:21.96px;line-height:30px;color:#2fa5dc;">0</span>
<span style="left:2475px;top:1082.0px;font-size:21.96px;line-height:30px;color:#b4b4b4;">px</span>
<svg style="left:2554.5px;top:1092px;" width="34" height="28" viewBox="0 0 34 28" preserveAspectRatio="none"><rect x="14" y="0" width="18" height="2" fill="#c8c8c8"/><rect x="14" y="4" width="18" height="2" fill="#c8c8c8"/><rect x="14" y="8" width="18" height="2" fill="#c8c8c8"/><rect x="14" y="12" width="12" height="2" fill="#c8c8c8"/><rect x="14" y="18" width="18" height="7" fill="#8a8a8a" stroke="#c8c8c8" stroke-width="1"/><path d="M0 23H8M5 19L9 23L5 27" stroke="#c8c8c8" stroke-width="1.8" fill="none"/></svg>
<span style="left:2601.5px;top:1086.0px;font-size:21.96px;line-height:30px;color:#2fa5dc;">0</span>
<span style="left:2621.5px;top:1086.0px;font-size:21.96px;line-height:30px;color:#b4b4b4;">px</span>
<div style="left:31px;top:923px;width:2360px;height:723px;background:#262626;"></div>
<div style="left:31px;top:923px;width:2360px;height:54px;background:#1d1d1d;"></div>
<div style="left:381px;top:923px;width:307px;height:56px;background:#262626;"></div>
<div style="left:31px;top:976.5px;width:351px;height:2.5px;background:#2d9fe0;"></div>
<div style="left:687px;top:976.5px;width:1704px;height:2.5px;background:#2d9fe0;"></div>
<div style="left:380.5px;top:923px;width:2.5px;height:56px;background:#2d9fe0;"></div>
<div style="left:686px;top:923px;width:2.5px;height:56px;background:#2d9fe0;"></div>
<div style="left:380.5px;top:923px;width:308px;height:2.5px;background:#2d9fe0;"></div>
<div style="left:2388.5px;top:976.5px;width:2.5px;height:670px;background:#2d9fe0;"></div>
<span style="left:84px;top:936.5px;font-size:21.96px;line-height:30px;color:#8b8b8b;letter-spacing:0.92px;">File d&#x27;attente de rendu</span>
<svg style="left:402.5px;top:946px;" width="11" height="11" viewBox="0 0 11 11" preserveAspectRatio="none"><path d="M0.5 0.5L10.5 10.5M10.5 0.5L0.5 10.5" stroke="#b4b4b4" stroke-width="1.6"/></svg>
<div style="left:433px;top:939px;width:20px;height:20px;background:#b39f7f;"></div>
<span style="left:475.5px;top:936.0px;font-size:21.96px;line-height:30px;color:#e8e8e8;letter-spacing:1.24px;">Composition 1</span>
<div style="left:654.5px;top:945px;width:13px;height:2px;background:#d6d6d6;"></div>
<div style="left:654.5px;top:951px;width:13px;height:2px;background:#d6d6d6;"></div>
<div style="left:654.5px;top:957px;width:13px;height:2px;background:#d6d6d6;"></div>
<span style="left:57px;top:984.0px;font-size:31px;line-height:36px;color:#2fa5dc;font-weight:700;-webkit-text-stroke:0;letter-spacing:0.82px;-webkit-text-stroke:0.8px;">0:00:00:00</span>
<span style="left:51px;top:1017.0px;font-size:20.05px;line-height:30px;color:#2fa5dc;letter-spacing:1.13px;">00000 (25.00 ips)</span>
<div style="left:247px;top:993px;width:806px;height:40px;background:#1d1d1d;"></div>
<svg style="left:256px;top:999px;" width="40" height="28" viewBox="0 0 40 28" preserveAspectRatio="none"><circle cx="15.5" cy="11.5" r="8" fill="none" stroke="#c4c4c4" stroke-width="2.2"/><path d="M10 17L2 25" stroke="#c4c4c4" stroke-width="2.4"/><path d="M28 19H38L33 24Z" fill="#c4c4c4"/></svg>
<svg style="left:1083px;top:1003px;" width="34" height="26" viewBox="0 0 34 26" preserveAspectRatio="none"><rect x="4" y="2" width="9" height="5" fill="#c0c0c0"/><rect x="0" y="4" width="30" height="1.6" fill="#c0c0c0"/><rect x="21" y="1" width="9" height="7" fill="#c0c0c0"/><path d="M16 5V17H22" stroke="#c0c0c0" stroke-width="1.6" fill="none"/><rect x="22" y="13" width="9" height="7" fill="#c0c0c0"/><path d="M26 22H33L29.5 26Z" fill="#c0c0c0"/></svg>
<svg style="left:1148px;top:994px;" width="38" height="38" viewBox="0 0 38 38" preserveAspectRatio="none"><path d="M10 1V19M1 10H19M3.5 3.5L16.5 16.5M16.5 3.5L3.5 16.5" stroke="#c0c0c0" stroke-width="2"/><circle cx="10" cy="10" r="4" fill="#c0c0c0"/><path d="M24 15L35 20V31L24 36L14 31V20Z" fill="#5e5e5e" stroke="#c0c0c0" stroke-width="2"/><path d="M14 20L24 25L35 20M24 25V36" stroke="#c0c0c0" stroke-width="2" fill="none"/></svg>
<svg style="left:1218px;top:999px;" width="34" height="29" viewBox="0 0 34 29" preserveAspectRatio="none"><rect x="0" y="15" width="34" height="13" fill="#8e8e8e"/><path d="M7 15Q7 2 17 2Q27 2 27 15Z" fill="#d0d0d0"/><path d="M14 10H20M17 10V18Q17 23 17 23" stroke="#262626" stroke-width="2.6" fill="none"/><path d="M15 15V22Q17 25 19 22V15Z" fill="#d0d0d0"/></svg>
<svg style="left:1272px;top:998px;" width="30" height="30" viewBox="0 0 30 30" preserveAspectRatio="none"><rect x="10" y="0" width="19" height="22" fill="#8a8a8a"/><rect x="14" y="2" width="11" height="18" fill="#5a5a5a"/><rect x="0" y="8" width="8" height="22" fill="#8a8a8a"/><rect x="8" y="24" width="14" height="6" fill="#8a8a8a"/><rect x="11" y="1" width="2" height="2" fill="#262626"/><rect x="26" y="1" width="2" height="2" fill="#262626"/><rect x="11" y="5" width="2" height="2" fill="#262626"/><rect x="26" y="5" width="2" height="2" fill="#262626"/><rect x="11" y="9" width="2" height="2" fill="#262626"/><rect x="26" y="9" width="2" height="2" fill="#262626"/><rect x="11" y="13" width="2" height="2" fill="#262626"/><rect x="26" y="13" width="2" height="2" fill="#262626"/><rect x="11" y="17" width="2" height="2" fill="#262626"/><rect x="26" y="17" width="2" height="2" fill="#262626"/><rect x="2" y="10" width="2" height="2" fill="#262626"/><rect x="2" y="14" width="2" height="2" fill="#262626"/><rect x="2" y="18" width="2" height="2" fill="#262626"/><rect x="2" y="22" width="2" height="2" fill="#262626"/><rect x="2" y="26" width="2" height="2" fill="#262626"/></svg>
<svg style="left:1324px;top:998px;" width="32" height="30" viewBox="0 0 32 30" preserveAspectRatio="none"><circle cx="11" cy="19" r="9.5" fill="#4a4a4a" stroke="#777" stroke-width="2"/><circle cx="15" cy="16" r="9.5" fill="#5a5a5a" stroke="#8a8a8a" stroke-width="2"/><circle cx="20" cy="12" r="9.5" fill="#777" stroke="#c8c8c8" stroke-width="2"/></svg>
<svg style="left:1390px;top:998px;" width="32" height="30" viewBox="0 0 32 30" preserveAspectRatio="none"><rect x="3" y="6" width="27" height="22" fill="#5a5a5a" stroke="#c0c0c0" stroke-width="2.2"/><path d="M5 12C16 12 16 24 28 24" stroke="#c0c0c0" stroke-width="2" fill="none"/><path d="M9 1V6M15 3V6M21 1V6M27 3V6" stroke="#c0c0c0" stroke-width="1.8"/><path d="M0 10H3M0 16H3M0 22H3" stroke="#c0c0c0" stroke-width="1.6"/></svg>
<div style="left:31px;top:1049px;width:1425px;height:2.5px;background:#0c0c0c;"></div>
<div style="left:31px;top:1051px;width:1425px;height:36px;background:#333333;"></div>
<div style="left:31px;top:1087px;width:1425px;height:2px;background:#0c0c0c;"></div>
<div style="left:165px;top:1060px;width:2px;height:20px;background:#0f0f0f;"></div>
<div style="left:229px;top:1060px;width:2px;height:20px;background:#0f0f0f;"></div>
<div style="left:295px;top:1060px;width:2px;height:20px;background:#0f0f0f;"></div>
<div style="left:555px;top:1060px;width:2px;height:20px;background:#0f0f0f;"></div>
<div style="left:829px;top:1060px;width:2px;height:20px;background:#0f0f0f;"></div>
<div style="left:1189px;top:1060px;width:2px;height:20px;background:#0f0f0f;"></div>
<div style="left:1423px;top:1060px;width:2px;height:20px;background:#0f0f0f;"></div>
<svg style="left:39px;top:1062px;" width="26" height="16" viewBox="0 0 26 16" preserveAspectRatio="none"><path d="M0 8Q13 -6 26 8Q13 22 0 8Z" fill="#a8a8a8"/><circle cx="13" cy="8" r="5.5" fill="#1e1e1e"/><circle cx="15" cy="6" r="2" fill="#a8a8a8"/></svg>
<svg style="left:71px;top:1059px;" width="24" height="22" viewBox="0 0 24 22" preserveAspectRatio="none"><path d="M0 7H6L14 0V22L6 15H0Z" fill="#a8a8a8"/><path d="M16 7Q19 11 16 15M19 3Q25 11 19 19" stroke="#a8a8a8" stroke-width="2" fill="none"/></svg>
<div style="left:104.5px;top:1062.5px;width:15px;height:15px;background:#a8a8a8;border-radius:50%;"></div>
<svg style="left:132px;top:1060px;" width="18" height="22" viewBox="0 0 18 22" preserveAspectRatio="none"><path d="M4 10V7Q4 2 9 2Q14 2 14 7V10" stroke="#a8a8a8" stroke-width="2.6" fill="none"/><rect x="0.5" y="10" width="17" height="12" rx="2" fill="#a8a8a8"/><rect x="7" y="13.5" width="4" height="5" fill="#333"/></svg>
<svg style="left:196px;top:1057px;" width="28" height="28" viewBox="0 0 28 28" preserveAspectRatio="none"><path d="M2 17L14 5L24 3L25 13L13 25Z" fill="#b9b9b9"/><circle cx="20" cy="8.5" r="2.4" fill="#333"/></svg>
<span style="left:241.5px;top:1055.5px;font-size:19.1px;line-height:30px;color:#8f8f8f;letter-spacing:-1.44px;">N°</span>
<span style="left:307.5px;top:1055.5px;font-size:19.1px;line-height:30px;color:#8f8f8f;letter-spacing:-0.0px;">Nom des calques</span>
<svg style="left:567px;top:1060px;" width="22" height="20" viewBox="0 0 22 20" preserveAspectRatio="none"><path d="M2 10Q2 1 11 1Q20 1 20 10Z" fill="#d0d0d0"/><rect x="0" y="12" width="7" height="2" fill="#d0d0d0"/><rect x="15" y="12" width="7" height="2" fill="#d0d0d0"/><path d="M9 9V15Q11 19 13 15V9Z" fill="#d0d0d0" stroke="#222" stroke-width="1"/><rect x="7" y="6" width="8" height="2" fill="#222"/></svg>
<svg style="left:598px;top:1060px;" width="20" height="20" viewBox="0 0 20 20" preserveAspectRatio="none"><path d="M10 0V20M0 10H20M3 3L17 17M17 3L3 17" stroke="#d0d0d0" stroke-width="1.7"/><circle cx="10" cy="10" r="5" fill="#262626" stroke="#d0d0d0" stroke-width="1.8"/></svg>
<svg style="left:627px;top:1060px;" width="22" height="20" viewBox="0 0 22 20" preserveAspectRatio="none"><rect x="0" y="0.0" width="5" height="4.4" fill="#c6c6c6"/><rect x="4" y="3.6" width="5" height="4.4" fill="#c6c6c6"/><rect x="8" y="7.2" width="5" height="4.4" fill="#c6c6c6"/><rect x="12" y="10.8" width="5" height="4.4" fill="#c6c6c6"/><rect x="16" y="14.4" width="5" height="4.4" fill="#c6c6c6"/></svg>
<span style="left:656.5px;top:1054.0px;font-size:27px;line-height:30px;color:#c6c6c6;font-family:'Liberation Serif',serif;font-style:italic;letter-spacing:-1px;">fx</span>
<svg style="left:685px;top:1059px;" width="25" height="23" viewBox="0 0 25 23" preserveAspectRatio="none"><rect x="3" y="0" width="22" height="19" fill="#8a8a8a"/><rect x="7" y="2" width="14" height="15" fill="#4a4a4a"/><path d="M0 4V22H20" stroke="#8a8a8a" stroke-width="2.4" fill="none"/><path d="M3 5H25M3 10H25M3 15H25" stroke="#c6c6c6" stroke-width="1"/></svg>
<svg style="left:716px;top:1059px;" width="24" height="23" viewBox="0 0 24 23" preserveAspectRatio="none"><circle cx="8" cy="15" r="7" fill="#4a4a4a" stroke="#6e6e6e" stroke-width="1.6"/><circle cx="11" cy="12" r="7" fill="#555" stroke="#8a8a8a" stroke-width="1.6"/><circle cx="15" cy="8" r="7" fill="#6e6e6e" stroke="#b4b4b4" stroke-width="1.8"/></svg>
<svg style="left:746px;top:1059px;" width="24" height="24" viewBox="0 0 24 24" preserveAspectRatio="none"><circle cx="12" cy="12" r="10.5" fill="#fff" stroke="#d6d6d6" stroke-width="1.6"/><path d="M19.4 4.6A10.5 10.5 0 0 0 4.6 19.4Z" fill="#000"/></svg>
<svg style="left:776px;top:1058px;" width="24" height="26" viewBox="0 0 24 26" preserveAspectRatio="none"><path d="M12 1L23 7V19L12 25L1 19V7Z" fill="#555" stroke="#b9b9b9" stroke-width="2"/><path d="M1 7L12 13L23 7M12 13V25" stroke="#b9b9b9" stroke-width="2" fill="none"/></svg>
<span style="left:841.5px;top:1055.5px;font-size:19.1px;line-height:30px;color:#8f8f8f;letter-spacing:-0.42px;">Mode</span>
<span style="left:1007px;top:1055.5px;font-size:19.1px;line-height:30px;color:#8f8f8f;">T</span>
<span style="left:1041px;top:1055.5px;font-size:19.1px;line-height:30px;color:#8f8f8f;letter-spacing:-0.8px;">Cache</span>
<span style="left:1201px;top:1055.5px;font-size:19.1px;line-height:30px;color:#8f8f8f;letter-spacing:-0.35px;">Parent</span>
<div style="left:31px;top:1121.2px;width:1425px;height:1.8px;background:#1e1e1e;"></div>
<div style="left:31px;top:1155.2px;width:1425px;height:1.8px;background:#1e1e1e;"></div>
<div style="left:31px;top:1189.2px;width:1425px;height:1.8px;background:#1e1e1e;"></div>
<div style="left:31px;top:1223.2px;width:1425px;height:1.8px;background:#1e1e1e;"></div>
<div style="left:31px;top:1257.2px;width:1425px;height:1.8px;background:#1e1e1e;"></div>
<div style="left:31px;top:1291.2px;width:1425px;height:1.8px;background:#1e1e1e;"></div>
<div style="left:31px;top:1325.2px;width:1425px;height:1.8px;background:#1e1e1e;"></div>
<div style="left:31px;top:1359.2px;width:1425px;height:1.8px;background:#1e1e1e;"></div>
<div style="left:31px;top:1393.2px;width:1425px;height:1.8px;background:#1e1e1e;"></div>
<div style="left:31px;top:1427.2px;width:1425px;height:1.8px;background:#1e1e1e;"></div>
<div style="left:31px;top:1461.2px;width:1425px;height:1.8px;background:#1e1e1e;"></div>
<div style="left:31px;top:1495.2px;width:1425px;height:1.8px;background:#1e1e1e;"></div>
<div style="left:31px;top:1529.2px;width:1425px;height:1.8px;background:#1e1e1e;"></div>
<div style="left:31px;top:1089.0px;width:1425px;height:32.2px;background:#2f2f2f;"></div>
<div style="left:31px;top:1497.0px;width:1425px;height:32.2px;background:#2f2f2f;"></div>
<div style="left:31px;top:1531.0px;width:1425px;height:32.2px;background:#2f2f2f;"></div>
<div style="left:39px;top:1091.0px;width:26px;height:26px;background:#191919;"></div>
<svg style="left:39px;top:1096.2px;" width="26" height="16" viewBox="0 0 26 16" preserveAspectRatio="none"><path d="M0 8Q13 -6 26 8Q13 22 0 8Z" fill="#a8a8a8"/><circle cx="13" cy="8" r="5.5" fill="#1e1e1e"/><circle cx="15" cy="6" r="2" fill="#a8a8a8"/></svg>
<div style="left:99px;top:1091.0px;width:26px;height:26px;background:#191919;"></div>
<div style="left:129px;top:1091.0px;width:26px;height:26px;background:#191919;"></div>
<svg style="left:175.5px;top:1098.7px;" width="15" height="15" viewBox="0 0 15 15" preserveAspectRatio="none"><path d="M0 0H15L7.5 15Z" fill="#c8c8c8"/></svg>
<div style="left:201px;top:1093.0px;width:24.5px;height:24.5px;background:#6b7de0;"></div>
<span style="left:243.9px;top:1090.2px;font-size:23.88px;line-height:30px;color:#b0b0b0;font-weight:700;-webkit-text-stroke:0;">1</span>
<svg style="left:303px;top:1093.2px;" width="24" height="24" viewBox="0 0 24 24" preserveAspectRatio="none"><path d="M12 1L15 9H23.5L16.7 14.2L19.3 22.5L12 17.5L4.7 22.5L7.3 14.2L0.5 9H9Z" fill="#e8e8e8" stroke="#111" stroke-width="2.2" paint-order="stroke"/></svg>
<span style="left:339px;top:1090.2px;font-size:22.92px;line-height:30px;color:#a6a6a6;font-weight:700;-webkit-text-stroke:0;letter-spacing:0.01px;">DSAA Silhouettes</span>
<div style="left:565px;top:1091.0px;width:26px;height:26px;background:#191919;"></div>
<div style="left:595px;top:1091.0px;width:26px;height:26px;background:#191919;"></div>
<div style="left:625px;top:1091.0px;width:26px;height:26px;background:#191919;"></div>
<div style="left:715px;top:1091.0px;width:26px;height:26px;background:#191919;"></div>
<div style="left:745px;top:1091.0px;width:26px;height:26px;background:#191919;"></div>
<div style="left:775px;top:1091.0px;width:26px;height:26px;background:#191919;"></div>
<svg style="left:567px;top:1094.2px;" width="22" height="20" viewBox="0 0 22 20" preserveAspectRatio="none"><path d="M2 10Q2 1 11 1Q20 1 20 10Z" fill="#e0e0e0"/><rect x="0" y="12" width="7" height="2" fill="#e0e0e0"/><rect x="15" y="12" width="7" height="2" fill="#e0e0e0"/><path d="M9 9V15Q11 19 13 15V9Z" fill="#e0e0e0" stroke="#222" stroke-width="1"/><rect x="7" y="6" width="8" height="2" fill="#222"/></svg>
<svg style="left:598px;top:1094.2px;" width="20" height="20" viewBox="0 0 20 20" preserveAspectRatio="none"><path d="M10 0V20M0 10H20M3 3L17 17M17 3L3 17" stroke="#8a8a8a" stroke-width="1.7"/><circle cx="10" cy="10" r="5" fill="#262626" stroke="#8a8a8a" stroke-width="1.8"/></svg>
<svg style="left:627px;top:1093.2px;" width="22" height="22" viewBox="0 0 22 22" preserveAspectRatio="none"><path d="M2 20L20 2" stroke="#d0d0d0" stroke-width="2.6"/></svg>
<div style="left:835px;top:1089.0px;width:155px;height:32.2px;background:#1f1f1f;"></div>
<span style="left:849.5px;top:1090.2px;font-size:21.96px;line-height:30px;color:#e8e8e8;letter-spacing:1.05px;">Normal</span>
<svg style="left:963.0px;top:1099.45px;" width="18" height="9.5" viewBox="0 0 18 9.5" preserveAspectRatio="none"><path d="M0 0H18L9.0 9.5Z" fill="#dcdcdc"/></svg>
<div style="left:999px;top:1091.0px;width:26px;height:26px;background:#191919;"></div>
<svg style="left:1200px;top:1094.2px;" width="22" height="22" viewBox="0 0 22 22" preserveAspectRatio="none"><path d="M11.7 12.0L11.6 12.1L11.5 12.3L11.4 12.4L11.2 12.5L11.1 12.6L10.9 12.7L10.7 12.8L10.4 12.8L10.2 12.8L10.0 12.7L9.7 12.7L9.5 12.6L9.2 12.4L9.0 12.3L8.8 12.1L8.6 11.8L8.5 11.6L8.3 11.3L8.2 11.0L8.2 10.6L8.1 10.3L8.2 9.9L8.2 9.6L8.3 9.2L8.5 8.9L8.7 8.5L9.0 8.2L9.3 7.9L9.6 7.7L10.0 7.5L10.4 7.3L10.8 7.1L11.3 7.1L11.7 7.0L12.2 7.1L12.7 7.2L13.2 7.3L13.6 7.5L14.1 7.8L14.5 8.1L14.9 8.5L15.2 8.9L15.5 9.4L15.7 9.9L15.9 10.5L16.0 11.0L16.1 11.6L16.0 12.2L15.9 12.8L15.8 13.4L15.5 14.0L15.2 14.6L14.8 15.1L14.4 15.6L13.9 16.0L13.3 16.4L12.7 16.7L12.0 16.9L11.3 17.1L10.6 17.2L9.9 17.2L9.2 17.1L8.4 16.9L7.7 16.6L7.0 16.3L6.4 15.8L5.8 15.3L5.3 14.7L4.8 14.1L4.4 13.4L4.1 12.6L3.9 11.8L3.7 11.0L3.7 10.1L3.8 9.3L4.0 8.4L4.2 7.6L4.6 6.8L5.1 6.0L5.6 5.3L6.3 4.6L7.0 4.1L7.8 3.6L8.7 3.2L9.6 2.9L10.5 2.7L11.5 2.6L12.5 2.6L13.5 2.8L14.4 3.0L15.4 3.4L16.3 3.9L17.1 4.5L17.9 5.2L18.6 6.0L19.2 6.9L19.7 7.8L20.1 8.8L20.4 9.9L20.5 11.0" stroke="#c4c4c4" stroke-width="1.8" fill="none"/></svg>
<div style="left:1235px;top:1089.0px;width:182px;height:32.2px;background:#1f1f1f;"></div>
<span style="left:1249.5px;top:1090.2px;font-size:21.96px;line-height:30px;color:#e8e8e8;letter-spacing:0.63px;">Aucun(e)</span>
<svg style="left:1389.0px;top:1099.45px;" width="18" height="9.5" viewBox="0 0 18 9.5" preserveAspectRatio="none"><path d="M0 0H18L9.0 9.5Z" fill="#dcdcdc"/></svg>
<div style="left:39px;top:1499.0px;width:26px;height:26px;background:#191919;"></div>
<div style="left:129px;top:1499.0px;width:26px;height:26px;background:#191919;"></div>
<svg style="left:175.5px;top:1507.2px;" width="15" height="14" viewBox="0 0 15 14" preserveAspectRatio="none"><path d="M0 0V14L15 7Z" fill="#c8c8c8"/></svg>
<div style="left:201px;top:1501.0px;width:24.5px;height:24.5px;background:#b93b3b;"></div>
<span style="left:243.9px;top:1498.2px;font-size:23.88px;line-height:30px;color:#b0b0b0;font-weight:700;-webkit-text-stroke:0;">2</span>
<span style="left:306.8px;top:1498.2px;font-size:27px;line-height:30px;color:#8a8a8a;font-family:'Liberation Serif',serif;">T</span>
<span style="left:339px;top:1498.2px;font-size:22.92px;line-height:30px;color:#a6a6a6;font-weight:700;-webkit-text-stroke:0;letter-spacing:-0.97px;">DSAA</span>
<div style="left:565px;top:1499.0px;width:26px;height:26px;background:#191919;"></div>
<div style="left:595px;top:1499.0px;width:26px;height:26px;background:#191919;"></div>
<div style="left:625px;top:1499.0px;width:26px;height:26px;background:#191919;"></div>
<div style="left:715px;top:1499.0px;width:26px;height:26px;background:#191919;"></div>
<div style="left:745px;top:1499.0px;width:26px;height:26px;background:#191919;"></div>
<div style="left:775px;top:1499.0px;width:26px;height:26px;background:#191919;"></div>
<svg style="left:567px;top:1502.2px;" width="22" height="20" viewBox="0 0 22 20" preserveAspectRatio="none"><path d="M2 10Q2 1 11 1Q20 1 20 10Z" fill="#e0e0e0"/><rect x="0" y="12" width="7" height="2" fill="#e0e0e0"/><rect x="15" y="12" width="7" height="2" fill="#e0e0e0"/><path d="M9 9V15Q11 19 13 15V9Z" fill="#e0e0e0" stroke="#222" stroke-width="1"/><rect x="7" y="6" width="8" height="2" fill="#222"/></svg>
<svg style="left:598px;top:1502.2px;" width="20" height="20" viewBox="0 0 20 20" preserveAspectRatio="none"><path d="M10 0V20M0 10H20M3 3L17 17M17 3L3 17" stroke="#8a8a8a" stroke-width="1.7"/><circle cx="10" cy="10" r="5" fill="#262626" stroke="#8a8a8a" stroke-width="1.8"/></svg>
<svg style="left:627px;top:1501.2px;" width="22" height="22" viewBox="0 0 22 22" preserveAspectRatio="none"><path d="M2 20L20 2" stroke="#d0d0d0" stroke-width="2.6"/></svg>
<div style="left:835px;top:1497.0px;width:155px;height:32.2px;background:#1f1f1f;"></div>
<span style="left:849.5px;top:1498.2px;font-size:21.96px;line-height:30px;color:#e8e8e8;letter-spacing:1.05px;">Normal</span>
<svg style="left:963.0px;top:1507.45px;" width="18" height="9.5" viewBox="0 0 18 9.5" preserveAspectRatio="none"><path d="M0 0H18L9.0 9.5Z" fill="#dcdcdc"/></svg>
<div style="left:999px;top:1499.0px;width:26px;height:26px;background:#191919;"></div>
<svg style="left:1200px;top:1502.2px;" width="22" height="22" viewBox="0 0 22 22" preserveAspectRatio="none"><path d="M11.7 12.0L11.6 12.1L11.5 12.3L11.4 12.4L11.2 12.5L11.1 12.6L10.9 12.7L10.7 12.8L10.4 12.8L10.2 12.8L10.0 12.7L9.7 12.7L9.5 12.6L9.2 12.4L9.0 12.3L8.8 12.1L8.6 11.8L8.5 11.6L8.3 11.3L8.2 11.0L8.2 10.6L8.1 10.3L8.2 9.9L8.2 9.6L8.3 9.2L8.5 8.9L8.7 8.5L9.0 8.2L9.3 7.9L9.6 7.7L10.0 7.5L10.4 7.3L10.8 7.1L11.3 7.1L11.7 7.0L12.2 7.1L12.7 7.2L13.2 7.3L13.6 7.5L14.1 7.8L14.5 8.1L14.9 8.5L15.2 8.9L15.5 9.4L15.7 9.9L15.9 10.5L16.0 11.0L16.1 11.6L16.0 12.2L15.9 12.8L15.8 13.4L15.5 14.0L15.2 14.6L14.8 15.1L14.4 15.6L13.9 16.0L13.3 16.4L12.7 16.7L12.0 16.9L11.3 17.1L10.6 17.2L9.9 17.2L9.2 17.1L8.4 16.9L7.7 16.6L7.0 16.3L6.4 15.8L5.8 15.3L5.3 14.7L4.8 14.1L4.4 13.4L4.1 12.6L3.9 11.8L3.7 11.0L3.7 10.1L3.8 9.3L4.0 8.4L4.2 7.6L4.6 6.8L5.1 6.0L5.6 5.3L6.3 4.6L7.0 4.1L7.8 3.6L8.7 3.2L9.6 2.9L10.5 2.7L11.5 2.6L12.5 2.6L13.5 2.8L14.4 3.0L15.4 3.4L16.3 3.9L17.1 4.5L17.9 5.2L18.6 6.0L19.2 6.9L19.7 7.8L20.1 8.8L20.4 9.9L20.5 11.0" stroke="#c4c4c4" stroke-width="1.8" fill="none"/></svg>
<div style="left:1235px;top:1497.0px;width:182px;height:32.2px;background:#1f1f1f;"></div>
<span style="left:1249.5px;top:1498.2px;font-size:21.96px;line-height:30px;color:#e8e8e8;letter-spacing:0.63px;">Aucun(e)</span>
<svg style="left:1389.0px;top:1507.45px;" width="18" height="9.5" viewBox="0 0 18 9.5" preserveAspectRatio="none"><path d="M0 0H18L9.0 9.5Z" fill="#dcdcdc"/></svg>
<div style="left:1035px;top:1497.0px;width:147px;height:32.2px;background:#1f1f1f;"></div>
<span style="left:1049.5px;top:1498.2px;font-size:21.96px;line-height:30px;color:#e8e8e8;letter-spacing:0.63px;">Aucun(e)</span>
<svg style="left:1155.0px;top:1507.45px;" width="18" height="9.5" viewBox="0 0 18 9.5" preserveAspectRatio="none"><path d="M0 0H18L9.0 9.5Z" fill="#dcdcdc"/></svg>
<div style="left:39px;top:1533.0px;width:26px;height:26px;background:#191919;"></div>
<svg style="left:39px;top:1538.2px;" width="26" height="16" viewBox="0 0 26 16" preserveAspectRatio="none"><path d="M0 8Q13 -6 26 8Q13 22 0 8Z" fill="#a8a8a8"/><circle cx="13" cy="8" r="5.5" fill="#1e1e1e"/><circle cx="15" cy="6" r="2" fill="#a8a8a8"/></svg>
<div style="left:99px;top:1533.0px;width:26px;height:26px;background:#191919;"></div>
<div style="left:129px;top:1533.0px;width:26px;height:26px;background:#191919;"></div>
<svg style="left:175.5px;top:1541.2px;" width="15" height="14" viewBox="0 0 15 14" preserveAspectRatio="none"><path d="M0 0V14L15 7Z" fill="#c8c8c8"/></svg>
<div style="left:201px;top:1535.0px;width:24.5px;height:24.5px;background:#b93b3b;"></div>
<span style="left:243.9px;top:1532.2px;font-size:23.88px;line-height:30px;color:#b0b0b0;font-weight:700;-webkit-text-stroke:0;">3</span>
<span style="left:306.8px;top:1532.2px;font-size:27px;line-height:30px;color:#8a8a8a;font-family:'Liberation Serif',serif;">T</span>
<span style="left:339px;top:1532.2px;font-size:22.92px;line-height:30px;color:#a6a6a6;font-weight:700;-webkit-text-stroke:0;letter-spacing:-0.49px;">DESIGN ...HIQUE</span>
<div style="left:565px;top:1533.0px;width:26px;height:26px;background:#191919;"></div>
<div style="left:595px;top:1533.0px;width:26px;height:26px;background:#191919;"></div>
<div style="left:625px;top:1533.0px;width:26px;height:26px;background:#191919;"></div>
<div style="left:715px;top:1533.0px;width:26px;height:26px;background:#191919;"></div>
<div style="left:745px;top:1533.0px;width:26px;height:26px;background:#191919;"></div>
<div style="left:775px;top:1533.0px;width:26px;height:26px;background:#191919;"></div>
<svg style="left:567px;top:1536.2px;" width="22" height="20" viewBox="0 0 22 20" preserveAspectRatio="none"><path d="M2 10Q2 1 11 1Q20 1 20 10Z" fill="#e0e0e0"/><rect x="0" y="12" width="7" height="2" fill="#e0e0e0"/><rect x="15" y="12" width="7" height="2" fill="#e0e0e0"/><path d="M9 9V15Q11 19 13 15V9Z" fill="#e0e0e0" stroke="#222" stroke-width="1"/><rect x="7" y="6" width="8" height="2" fill="#222"/></svg>
<svg style="left:598px;top:1536.2px;" width="20" height="20" viewBox="0 0 20 20" preserveAspectRatio="none"><path d="M10 0V20M0 10H20M3 3L17 17M17 3L3 17" stroke="#8a8a8a" stroke-width="1.7"/><circle cx="10" cy="10" r="5" fill="#262626" stroke="#8a8a8a" stroke-width="1.8"/></svg>
<svg style="left:627px;top:1535.2px;" width="22" height="22" viewBox="0 0 22 22" preserveAspectRatio="none"><path d="M2 20L20 2" stroke="#d0d0d0" stroke-width="2.6"/></svg>
<div style="left:835px;top:1531.0px;width:155px;height:32.2px;background:#1f1f1f;"></div>
<span style="left:849.5px;top:1532.2px;font-size:21.96px;line-height:30px;color:#e8e8e8;letter-spacing:1.05px;">Normal</span>
<svg style="left:963.0px;top:1541.45px;" width="18" height="9.5" viewBox="0 0 18 9.5" preserveAspectRatio="none"><path d="M0 0H18L9.0 9.5Z" fill="#dcdcdc"/></svg>
<div style="left:999px;top:1533.0px;width:26px;height:26px;background:#191919;"></div>
<svg style="left:1200px;top:1536.2px;" width="22" height="22" viewBox="0 0 22 22" preserveAspectRatio="none"><path d="M11.7 12.0L11.6 12.1L11.5 12.3L11.4 12.4L11.2 12.5L11.1 12.6L10.9 12.7L10.7 12.8L10.4 12.8L10.2 12.8L10.0 12.7L9.7 12.7L9.5 12.6L9.2 12.4L9.0 12.3L8.8 12.1L8.6 11.8L8.5 11.6L8.3 11.3L8.2 11.0L8.2 10.6L8.1 10.3L8.2 9.9L8.2 9.6L8.3 9.2L8.5 8.9L8.7 8.5L9.0 8.2L9.3 7.9L9.6 7.7L10.0 7.5L10.4 7.3L10.8 7.1L11.3 7.1L11.7 7.0L12.2 7.1L12.7 7.2L13.2 7.3L13.6 7.5L14.1 7.8L14.5 8.1L14.9 8.5L15.2 8.9L15.5 9.4L15.7 9.9L15.9 10.5L16.0 11.0L16.1 11.6L16.0 12.2L15.9 12.8L15.8 13.4L15.5 14.0L15.2 14.6L14.8 15.1L14.4 15.6L13.9 16.0L13.3 16.4L12.7 16.7L12.0 16.9L11.3 17.1L10.6 17.2L9.9 17.2L9.2 17.1L8.4 16.9L7.7 16.6L7.0 16.3L6.4 15.8L5.8 15.3L5.3 14.7L4.8 14.1L4.4 13.4L4.1 12.6L3.9 11.8L3.7 11.0L3.7 10.1L3.8 9.3L4.0 8.4L4.2 7.6L4.6 6.8L5.1 6.0L5.6 5.3L6.3 4.6L7.0 4.1L7.8 3.6L8.7 3.2L9.6 2.9L10.5 2.7L11.5 2.6L12.5 2.6L13.5 2.8L14.4 3.0L15.4 3.4L16.3 3.9L17.1 4.5L17.9 5.2L18.6 6.0L19.2 6.9L19.7 7.8L20.1 8.8L20.4 9.9L20.5 11.0" stroke="#c4c4c4" stroke-width="1.8" fill="none"/></svg>
<div style="left:1235px;top:1531.0px;width:182px;height:32.2px;background:#1f1f1f;"></div>
<span style="left:1249.5px;top:1532.2px;font-size:21.96px;line-height:30px;color:#e8e8e8;letter-spacing:0.63px;">Aucun(e)</span>
<svg style="left:1389.0px;top:1541.45px;" width="18" height="9.5" viewBox="0 0 18 9.5" preserveAspectRatio="none"><path d="M0 0H18L9.0 9.5Z" fill="#dcdcdc"/></svg>
<div style="left:1035px;top:1531.0px;width:147px;height:32.2px;background:#1f1f1f;"></div>
<span style="left:1049.5px;top:1532.2px;font-size:21.96px;line-height:30px;color:#e8e8e8;letter-spacing:0.63px;">Aucun(e)</span>
<svg style="left:1155.0px;top:1541.45px;" width="18" height="9.5" viewBox="0 0 18 9.5" preserveAspectRatio="none"><path d="M0 0H18L9.0 9.5Z" fill="#dcdcdc"/></svg>
<svg style="left:209.5px;top:1132.7px;" width="15" height="15" viewBox="0 0 15 15" preserveAspectRatio="none"><path d="M0 0H15L7.5 15Z" fill="#c8c8c8"/></svg>
<span style="left:243px;top:1124.2px;font-size:21.96px;line-height:30px;color:#a9a9a9;letter-spacing:1.08px;">Contenu</span>
<span style="left:698.5px;top:1124.2px;font-size:21.96px;line-height:30px;color:#a9a9a9;letter-spacing:1.28px;">Ajouter :</span>
<svg style="left:797px;top:1127.2px;" width="22" height="22" viewBox="0 0 22 22" preserveAspectRatio="none"><circle cx="11" cy="11" r="11" fill="#c6c6c6"/><path d="M8 5V17L16 11Z" fill="#262626"/></svg>
<div style="left:39px;top:1159.0px;width:28px;height:27px;background:#191919;"></div>
<svg style="left:40px;top:1165.2px;" width="26" height="16" viewBox="0 0 26 16" preserveAspectRatio="none"><path d="M0 8Q13 -6 26 8Q13 22 0 8Z" fill="#a8a8a8"/><circle cx="13" cy="8" r="5.5" fill="#1e1e1e"/><circle cx="15" cy="6" r="2" fill="#a8a8a8"/></svg>
<svg style="left:244.5px;top:1167.2px;" width="15" height="14" viewBox="0 0 15 14" preserveAspectRatio="none"><path d="M0 0V14L15 7Z" fill="#c8c8c8"/></svg>
<span style="left:278px;top:1158.2px;font-size:21.96px;line-height:30px;color:#a9a9a9;">D</span>
<div style="left:565px;top:1157.0px;width:256px;height:32.2px;background:#1f1f1f;"></div>
<span style="left:579.5px;top:1158.2px;font-size:21.96px;line-height:30px;color:#e8e8e8;letter-spacing:1.05px;">Normal</span>
<svg style="left:793.0px;top:1167.45px;" width="18" height="9.5" viewBox="0 0 18 9.5" preserveAspectRatio="none"><path d="M0 0H18L9.0 9.5Z" fill="#dcdcdc"/></svg>
<div style="left:39px;top:1193.0px;width:28px;height:27px;background:#191919;"></div>
<svg style="left:40px;top:1199.2px;" width="26" height="16" viewBox="0 0 26 16" preserveAspectRatio="none"><path d="M0 8Q13 -6 26 8Q13 22 0 8Z" fill="#a8a8a8"/><circle cx="13" cy="8" r="5.5" fill="#1e1e1e"/><circle cx="15" cy="6" r="2" fill="#a8a8a8"/></svg>
<svg style="left:244.5px;top:1201.2px;" width="15" height="14" viewBox="0 0 15 14" preserveAspectRatio="none"><path d="M0 0V14L15 7Z" fill="#c8c8c8"/></svg>
<span style="left:278px;top:1192.2px;font-size:21.96px;line-height:30px;color:#a9a9a9;">S</span>
<div style="left:565px;top:1191.0px;width:256px;height:32.2px;background:#1f1f1f;"></div>
<span style="left:579.5px;top:1192.2px;font-size:21.96px;line-height:30px;color:#e8e8e8;letter-spacing:1.05px;">Normal</span>
<svg style="left:793.0px;top:1201.45px;" width="18" height="9.5" viewBox="0 0 18 9.5" preserveAspectRatio="none"><path d="M0 0H18L9.0 9.5Z" fill="#dcdcdc"/></svg>
<div style="left:39px;top:1227.0px;width:28px;height:27px;background:#191919;"></div>
<svg style="left:40px;top:1233.2px;" width="26" height="16" viewBox="0 0 26 16" preserveAspectRatio="none"><path d="M0 8Q13 -6 26 8Q13 22 0 8Z" fill="#a8a8a8"/><circle cx="13" cy="8" r="5.5" fill="#1e1e1e"/><circle cx="15" cy="6" r="2" fill="#a8a8a8"/></svg>
<svg style="left:244.5px;top:1235.2px;" width="15" height="14" viewBox="0 0 15 14" preserveAspectRatio="none"><path d="M0 0V14L15 7Z" fill="#c8c8c8"/></svg>
<span style="left:278px;top:1226.2px;font-size:21.96px;line-height:30px;color:#a9a9a9;">A</span>
<div style="left:565px;top:1225.0px;width:256px;height:32.2px;background:#1f1f1f;"></div>
<span style="left:579.5px;top:1226.2px;font-size:21.96px;line-height:30px;color:#e8e8e8;letter-spacing:1.05px;">Normal</span>
<svg style="left:793.0px;top:1235.45px;" width="18" height="9.5" viewBox="0 0 18 9.5" preserveAspectRatio="none"><path d="M0 0H18L9.0 9.5Z" fill="#dcdcdc"/></svg>
<div style="left:39px;top:1261.0px;width:28px;height:27px;background:#191919;"></div>
<svg style="left:40px;top:1267.2px;" width="26" height="16" viewBox="0 0 26 16" preserveAspectRatio="none"><path d="M0 8Q13 -6 26 8Q13 22 0 8Z" fill="#a8a8a8"/><circle cx="13" cy="8" r="5.5" fill="#1e1e1e"/><circle cx="15" cy="6" r="2" fill="#a8a8a8"/></svg>
<svg style="left:244.5px;top:1269.2px;" width="15" height="14" viewBox="0 0 15 14" preserveAspectRatio="none"><path d="M0 0V14L15 7Z" fill="#c8c8c8"/></svg>
<span style="left:278px;top:1260.2px;font-size:21.96px;line-height:30px;color:#a9a9a9;">A</span>
<div style="left:565px;top:1259.0px;width:256px;height:32.2px;background:#1f1f1f;"></div>
<span style="left:579.5px;top:1260.2px;font-size:21.96px;line-height:30px;color:#e8e8e8;letter-spacing:1.05px;">Normal</span>
<svg style="left:793.0px;top:1269.45px;" width="18" height="9.5" viewBox="0 0 18 9.5" preserveAspectRatio="none"><path d="M0 0H18L9.0 9.5Z" fill="#dcdcdc"/></svg>
<div style="left:39px;top:1295.0px;width:28px;height:27px;background:#191919;"></div>
<svg style="left:40px;top:1301.2px;" width="26" height="16" viewBox="0 0 26 16" preserveAspectRatio="none"><path d="M0 8Q13 -6 26 8Q13 22 0 8Z" fill="#a8a8a8"/><circle cx="13" cy="8" r="5.5" fill="#1e1e1e"/><circle cx="15" cy="6" r="2" fill="#a8a8a8"/></svg>
<svg style="left:243.5px;top:1302.7px;" width="15" height="15" viewBox="0 0 15 15" preserveAspectRatio="none"><path d="M0 0H15L7.5 15Z" fill="#c8c8c8"/></svg>
<span style="left:277px;top:1294.2px;font-size:21.96px;line-height:30px;color:#a9a9a9;letter-spacing:0.68px;">Raccorder les tracés 1</span>
<svg style="left:306px;top:1329.2px;" width="22" height="26" viewBox="0 0 22 26" preserveAspectRatio="none"><circle cx="11" cy="15" r="8.6" fill="#4a4a4a" stroke="#c4c4c4" stroke-width="2.2"/><rect x="6" y="0" width="10" height="2.4" fill="#c4c4c4"/><rect x="10" y="2" width="2.2" height="4" fill="#c4c4c4"/></svg>
<span style="left:343px;top:1328.2px;font-size:21.96px;line-height:30px;color:#a9a9a9;letter-spacing:1.35px;">Début</span>
<span style="left:567px;top:1328.2px;font-size:21.96px;line-height:30px;color:#2fa5dc;letter-spacing:0.65px;">0,0%</span>
<svg style="left:47px;top:1369.2px;" width="11" height="16" viewBox="0 0 11 16" preserveAspectRatio="none"><path d="M11 0V16L0 8Z" fill="#3f3f3f"/></svg>
<svg style="left:72px;top:1367.2px;" width="20" height="20" viewBox="0 0 20 20" preserveAspectRatio="none"><path d="M10 0L20 10L10 20L0 10Z" fill="#2fb4ea"/></svg>
<svg style="left:106px;top:1369.2px;" width="11" height="16" viewBox="0 0 11 16" preserveAspectRatio="none"><path d="M0 0V16L11 8Z" fill="#bdbdbd"/></svg>
<svg style="left:306px;top:1363.2px;" width="22" height="26" viewBox="0 0 22 26" preserveAspectRatio="none"><circle cx="11" cy="15" r="8.6" fill="none" stroke="#2fb4ea" stroke-width="2.2"/><rect x="6" y="0" width="10" height="2.4" fill="#2fb4ea"/><rect x="10" y="2" width="2.2" height="4" fill="#2fb4ea"/><path d="M11 15L15 10" stroke="#2fb4ea" stroke-width="2"/></svg>
<svg style="left:342px;top:1365.2px;" width="24" height="22" viewBox="0 0 24 22" preserveAspectRatio="none"><path d="M2 0V20H24" stroke="#c4c4c4" stroke-width="2" fill="none"/><path d="M3 19L11 5L15 12L21 9" stroke="#c4c4c4" stroke-width="1.8" fill="none"/></svg>
<span style="left:381px;top:1362.2px;font-size:21.96px;line-height:30px;color:#a9a9a9;letter-spacing:0.25px;">Fin</span>
<span style="left:567px;top:1362.2px;font-size:21.96px;line-height:30px;color:#2fa5dc;letter-spacing:0.65px;">0,0%</span>
<svg style="left:306px;top:1397.2px;" width="22" height="26" viewBox="0 0 22 26" preserveAspectRatio="none"><circle cx="11" cy="15" r="8.6" fill="#4a4a4a" stroke="#c4c4c4" stroke-width="2.2"/><rect x="6" y="0" width="10" height="2.4" fill="#c4c4c4"/><rect x="10" y="2" width="2.2" height="4" fill="#c4c4c4"/></svg>
<span style="left:343px;top:1396.2px;font-size:21.96px;line-height:30px;color:#a9a9a9;letter-spacing:0.39px;">Décalage</span>
<span style="left:567px;top:1396.2px;font-size:21.96px;line-height:30px;color:#2fa5dc;letter-spacing:2.61px;">0x+0,0°</span>
<span style="left:311px;top:1430.2px;font-size:21.96px;line-height:30px;color:#a9a9a9;letter-spacing:0.86px;">Raccord...es multiples</span>
<div style="left:565px;top:1429.0px;width:256px;height:32.2px;background:#1f1f1f;"></div>
<span style="left:579.5px;top:1430.2px;font-size:21.96px;line-height:30px;color:#e8e8e8;letter-spacing:1.05px;">Simultanément</span>
<svg style="left:793.0px;top:1439.45px;" width="18" height="9.5" viewBox="0 0 18 9.5" preserveAspectRatio="none"><path d="M0 0H18L9.0 9.5Z" fill="#dcdcdc"/></svg>
<svg style="left:210.5px;top:1473.2px;" width="15" height="14" viewBox="0 0 15 14" preserveAspectRatio="none"><path d="M0 0V14L15 7Z" fill="#c8c8c8"/></svg>
<span style="left:243px;top:1464.2px;font-size:21.96px;line-height:30px;color:#a9a9a9;letter-spacing:1.33px;">Transformer</span>
<span style="left:565px;top:1464.2px;font-size:21.96px;line-height:30px;color:#2fa5dc;letter-spacing:0.79px;-webkit-text-stroke:0.7px;">Réinit.</span>
<div style="left:1455px;top:979px;width:2.5px;height:667px;background:#111;"></div>
<div style="left:1457px;top:988px;width:898px;height:20px;background:#1f1f1f;"></div>
<div style="left:1457px;top:1008px;width:898px;height:41px;background:#242424;"></div>
<div style="left:2355px;top:988px;width:33.5px;height:658px;background:#151515;"></div>
<svg style="left:2340px;top:986px;" width="16" height="12" viewBox="0 0 16 12" preserveAspectRatio="none"><path d="M0 0L16 12V0Z" fill="#000"/></svg>
<div style="left:1457px;top:992px;width:83px;height:15.5px;background:#35b7ea;border-radius:8px;"></div>
<div style="left:1468px;top:992px;width:61px;height:15.5px;background:#696969;"></div>
<div style="left:1460.5px;top:995px;width:1.5px;height:9px;background:#1b4d66;"></div>
<div style="left:1464px;top:995px;width:1.5px;height:9px;background:#1b4d66;"></div>
<div style="left:1532.5px;top:995px;width:1.5px;height:9px;background:#1b4d66;"></div>
<div style="left:1536px;top:995px;width:1.5px;height:9px;background:#1b4d66;"></div>
<div style="left:1471px;top:992px;width:2px;height:15.5px;background:#d03030;"></div>
<div style="left:1457px;top:1047px;width:898px;height:33px;background:#212121;"></div>
<span style="left:1570.0px;top:1009.0px;font-size:18.14px;line-height:30px;color:#8c8c8c;letter-spacing:1.63px;">01s</span>
<div style="left:1587px;top:1038px;width:2px;height:8px;background:#808080;"></div>
<span style="left:1686.2px;top:1009.0px;font-size:18.14px;line-height:30px;color:#8c8c8c;letter-spacing:1.63px;">02s</span>
<div style="left:1703px;top:1038px;width:2px;height:8px;background:#808080;"></div>
<span style="left:1802.2px;top:1009.0px;font-size:18.14px;line-height:30px;color:#8c8c8c;letter-spacing:1.63px;">03s</span>
<div style="left:1819px;top:1038px;width:2px;height:19.5px;background:#808080;"></div>
<span style="left:1918.3px;top:1009.0px;font-size:18.14px;line-height:30px;color:#8c8c8c;letter-spacing:1.63px;">04s</span>
<div style="left:1935px;top:1038px;width:2px;height:19.5px;background:#808080;"></div>
<span style="left:2034.4px;top:1009.0px;font-size:18.14px;line-height:30px;color:#8c8c8c;letter-spacing:1.63px;">05s</span>
<div style="left:2051px;top:1038px;width:2px;height:19.5px;background:#808080;"></div>
<span style="left:2150.6px;top:1009.0px;font-size:18.14px;line-height:30px;color:#8c8c8c;letter-spacing:1.63px;">06s</span>
<div style="left:2167px;top:1038px;width:2px;height:19.5px;background:#808080;"></div>
<span style="left:2266.7px;top:1009.0px;font-size:18.14px;line-height:30px;color:#8c8c8c;letter-spacing:1.63px;">07s</span>
<div style="left:2283px;top:1038px;width:2px;height:19.5px;background:#808080;"></div>
<span style="left:1477.4px;top:1009.0px;font-size:18.14px;line-height:30px;color:#5a5a5a;letter-spacing:1px;">0s</span>
<div style="left:2342px;top:988px;width:13px;height:92px;background:#1b1b1b;"></div>
<div style="left:1459px;top:1048.5px;width:280px;height:31px;background:#0a0a0a;border-radius:6px;"></div>
<div style="left:1469px;top:1049.5px;width:258px;height:29.5px;background:#646464;"></div>
<div style="left:1459px;top:1049.5px;width:10.5px;height:29.5px;background:#35b7ea;border-radius:6px 0 0 6px;"></div>
<div style="left:1727px;top:1049.5px;width:11.5px;height:29.5px;background:#35b7ea;border-radius:0 6px 6px 0;"></div>
<div style="left:1462px;top:1056px;width:1.5px;height:17px;background:#1b4d66;"></div>
<div style="left:1465.5px;top:1056px;width:1.5px;height:17px;background:#1b4d66;"></div>
<div style="left:1730.5px;top:1056px;width:1.5px;height:17px;background:#1b4d66;"></div>
<div style="left:1734px;top:1056px;width:1.5px;height:17px;background:#1b4d66;"></div>
<div style="left:1457px;top:1080px;width:898px;height:9.5px;background:#111;"></div>
<div style="left:1472px;top:1080.8px;width:883px;height:6.5px;background:#16c224;"></div>
<div style="left:1472px;top:1089px;width:254px;height:557px;background:#333333;"></div>
<div style="left:1457px;top:1121.2px;width:898px;height:1.8px;background:#1f1f1f;"></div>
<div style="left:1457px;top:1155.2px;width:898px;height:1.8px;background:#1f1f1f;"></div>
<div style="left:1457px;top:1189.2px;width:898px;height:1.8px;background:#1f1f1f;"></div>
<div style="left:1457px;top:1223.2px;width:898px;height:1.8px;background:#1f1f1f;"></div>
<div style="left:1457px;top:1257.2px;width:898px;height:1.8px;background:#1f1f1f;"></div>
<div style="left:1457px;top:1291.2px;width:898px;height:1.8px;background:#1f1f1f;"></div>
<div style="left:1457px;top:1325.2px;width:898px;height:1.8px;background:#1f1f1f;"></div>
<div style="left:1457px;top:1359.2px;width:898px;height:1.8px;background:#1f1f1f;"></div>
<div style="left:1457px;top:1393.2px;width:898px;height:1.8px;background:#1f1f1f;"></div>
<div style="left:1457px;top:1427.2px;width:898px;height:1.8px;background:#1f1f1f;"></div>
<div style="left:1457px;top:1461.2px;width:898px;height:1.8px;background:#1f1f1f;"></div>
<div style="left:1457px;top:1495.2px;width:898px;height:1.8px;background:#1f1f1f;"></div>
<div style="left:1457px;top:1529.2px;width:898px;height:1.8px;background:#1f1f1f;"></div>
<div style="left:1472px;top:1089.0px;width:883px;height:32.2px;background:#4c568b;"></div>
<div style="left:1472px;top:1089.0px;width:254px;height:32.2px;background:#525c91;"></div>
<div style="left:1472px;top:1497.0px;width:883px;height:32.2px;background:#713334;"></div>
<div style="left:1472px;top:1497.0px;width:254px;height:32.2px;background:#76393a;"></div>
<div style="left:1472px;top:1531.0px;width:883px;height:32.2px;background:#713334;"></div>
<div style="left:1472px;top:1531.0px;width:254px;height:32.2px;background:#76393a;"></div>
<svg style="left:1464px;top:1370.7px;" width="16" height="16" viewBox="0 0 18 18" preserveAspectRatio="none"><path d="M9 0L0 9L9 18Z" fill="#cfcfcf"/><path d="M9 0L18 9L9 18Z" fill="#5a5a5a"/><path d="M9 0.8L17.2 9L9 17.2L0.8 9Z" fill="none" stroke="#d6d6d6" stroke-width="1.4"/></svg>
<svg style="left:1696px;top:1370.7px;" width="16" height="16" viewBox="0 0 18 18" preserveAspectRatio="none"><path d="M9 0L0 9L9 18Z" fill="#5a5a5a"/><path d="M9 0L18 9L9 18Z" fill="#cfcfcf"/><path d="M9 0.8L17.2 9L9 17.2L0.8 9Z" fill="none" stroke="#d6d6d6" stroke-width="1.4"/></svg>
<div style="left:1471px;top:1044px;width:2px;height:602px;background:#e8141c;"></div>
<svg style="left:1460.5px;top:1019px;" width="23" height="27" viewBox="0 0 23 27" preserveAspectRatio="none"><path d="M0 0H23V12L11.5 26L0 12Z" fill="#35b7ea"/><path d="M7 4V10M11.5 4V10M16 4V10" stroke="#15506b" stroke-width="1.6"/><rect x="10.7" y="13" width="1.6" height="13" fill="#3c3c3c"/><rect x="9" y="12" width="5" height="1.6" fill="#15506b"/></svg>
<svg style="left:1463.6px;top:1128.2px;" width="14" height="22" viewBox="0 0 14 22" preserveAspectRatio="none"><path d="M0 1H14M0 21H14" stroke="#bdbdbd" stroke-width="1.6" fill="none"/><path d="M6.4 1V21" stroke="#c8c8c8" stroke-width="1.8"/></svg>
<svg style="left:1463.6px;top:1162.2px;" width="14" height="22" viewBox="0 0 14 22" preserveAspectRatio="none"><path d="M0 1H14M0 21H14" stroke="#bdbdbd" stroke-width="1.6" fill="none"/><path d="M6.4 1V21" stroke="#c8c8c8" stroke-width="1.8"/></svg>
<svg style="left:1463.6px;top:1196.2px;" width="14" height="22" viewBox="0 0 14 22" preserveAspectRatio="none"><path d="M0 1H14M0 21H14" stroke="#bdbdbd" stroke-width="1.6" fill="none"/><path d="M6.4 1V21" stroke="#c8c8c8" stroke-width="1.8"/></svg>
<svg style="left:1463.6px;top:1230.2px;" width="14" height="22" viewBox="0 0 14 22" preserveAspectRatio="none"><path d="M0 1H14M0 21H14" stroke="#bdbdbd" stroke-width="1.6" fill="none"/><path d="M6.4 1V21" stroke="#c8c8c8" stroke-width="1.8"/></svg>
<svg style="left:1463.6px;top:1264.2px;" width="14" height="22" viewBox="0 0 14 22" preserveAspectRatio="none"><path d="M0 1H14M0 21H14" stroke="#bdbdbd" stroke-width="1.6" fill="none"/><path d="M6.4 1V21" stroke="#c8c8c8" stroke-width="1.8"/></svg>
<svg style="left:1463.6px;top:1298.2px;" width="14" height="22" viewBox="0 0 14 22" preserveAspectRatio="none"><path d="M0 1H14M0 21H14" stroke="#bdbdbd" stroke-width="1.6" fill="none"/><path d="M6.4 1V21" stroke="#c8c8c8" stroke-width="1.8"/></svg>
<svg style="left:1463.6px;top:1332.2px;" width="14" height="22" viewBox="0 0 14 22" preserveAspectRatio="none"><path d="M0 1H14M0 21H14" stroke="#bdbdbd" stroke-width="1.6" fill="none"/><path d="M6.4 1V21" stroke="#c8c8c8" stroke-width="1.8"/></svg>
<svg style="left:1463.6px;top:1400.2px;" width="14" height="22" viewBox="0 0 14 22" preserveAspectRatio="none"><path d="M0 1H14M0 21H14" stroke="#bdbdbd" stroke-width="1.6" fill="none"/><path d="M6.4 1V21" stroke="#c8c8c8" stroke-width="1.8"/></svg>
<svg style="left:1463.6px;top:1468.2px;" width="14" height="22" viewBox="0 0 14 22" preserveAspectRatio="none"><path d="M0 1H14M0 21H14" stroke="#bdbdbd" stroke-width="1.6" fill="none"/><path d="M6.4 1V21" stroke="#c8c8c8" stroke-width="1.8"/></svg>
<div style="left:2355px;top:988px;width:33.5px;height:99px;background:#262626;"></div>
<svg style="left:2362px;top:1052px;" width="26" height="31" viewBox="0 0 28 33" preserveAspectRatio="none"><path d="M2 1H24V17L13 30L2 17Z" fill="#7e7e7e" stroke="#c4c4c4" stroke-width="1.6"/></svg>
<div style="left:2355px;top:1087px;width:33.5px;height:2px;background:#0c0c0c;"></div>
<div style="left:2355px;top:1089px;width:33.5px;height:32.2px;background:#262626;"></div>
<svg style="left:2356px;top:1093px;" width="32" height="28" viewBox="0 0 32 28" preserveAspectRatio="none"><circle cx="11" cy="11" r="9" fill="#8a8a8a"/><rect x="16" y="9" width="13" height="12" fill="#262626" stroke="#d0d0d0" stroke-width="1.8"/><path d="M1 26L10 11L19 26Z" fill="#9a9a9a" stroke="#e0e0e0" stroke-width="1.6"/></svg>
<span style="left:1214px;top:913.7px;font-size:45.7px;line-height:56px;color:#f345f5;letter-spacing:-0.19px;-webkit-text-stroke:0;">Remettez l&#x27;indicateur de l&#x27;heure à la position de départ</span>
<div style="left:2380px;top:485px;width:420px;height:131px;background:transparent;border:6.3px solid #f345f5;box-sizing:border-box;"></div>
<svg style="left:1470px;top:980px;" width="250" height="70" viewBox="0 0 250 70" preserveAspectRatio="none"><path d="M30.0 55.0C31.3 53.6 32.8 50.8 37.8 46.9C42.8 43.0 52.8 36.4 59.8 31.9C66.8 27.4 73.0 22.9 79.7 19.9C86.4 16.9 93.1 15.4 99.7 14.0C106.3 12.6 111.3 11.9 119.6 11.4C127.9 10.9 139.5 10.6 149.5 11.0C159.5 11.4 170.1 12.7 179.4 14.0C188.7 15.3 198.1 16.9 205.4 18.9C212.7 20.9 218.5 23.2 223.3 25.9C228.1 28.6 232.7 32.6 234.3 34.9C235.9 37.2 233.1 38.7 232.8 39.5" stroke="#f345f5" stroke-width="3.2" fill="none" stroke-linecap="round" stroke-linejoin="round"/><circle cx="232.3" cy="39" r="4.3" fill="#f345f5"/><path d="M24.7 35.5L10.5 59.5L42.5 61.5Z" fill="#f345f5" stroke="#f345f5" stroke-width="2.5" stroke-linejoin="round"/></svg>
</div></body></html>
